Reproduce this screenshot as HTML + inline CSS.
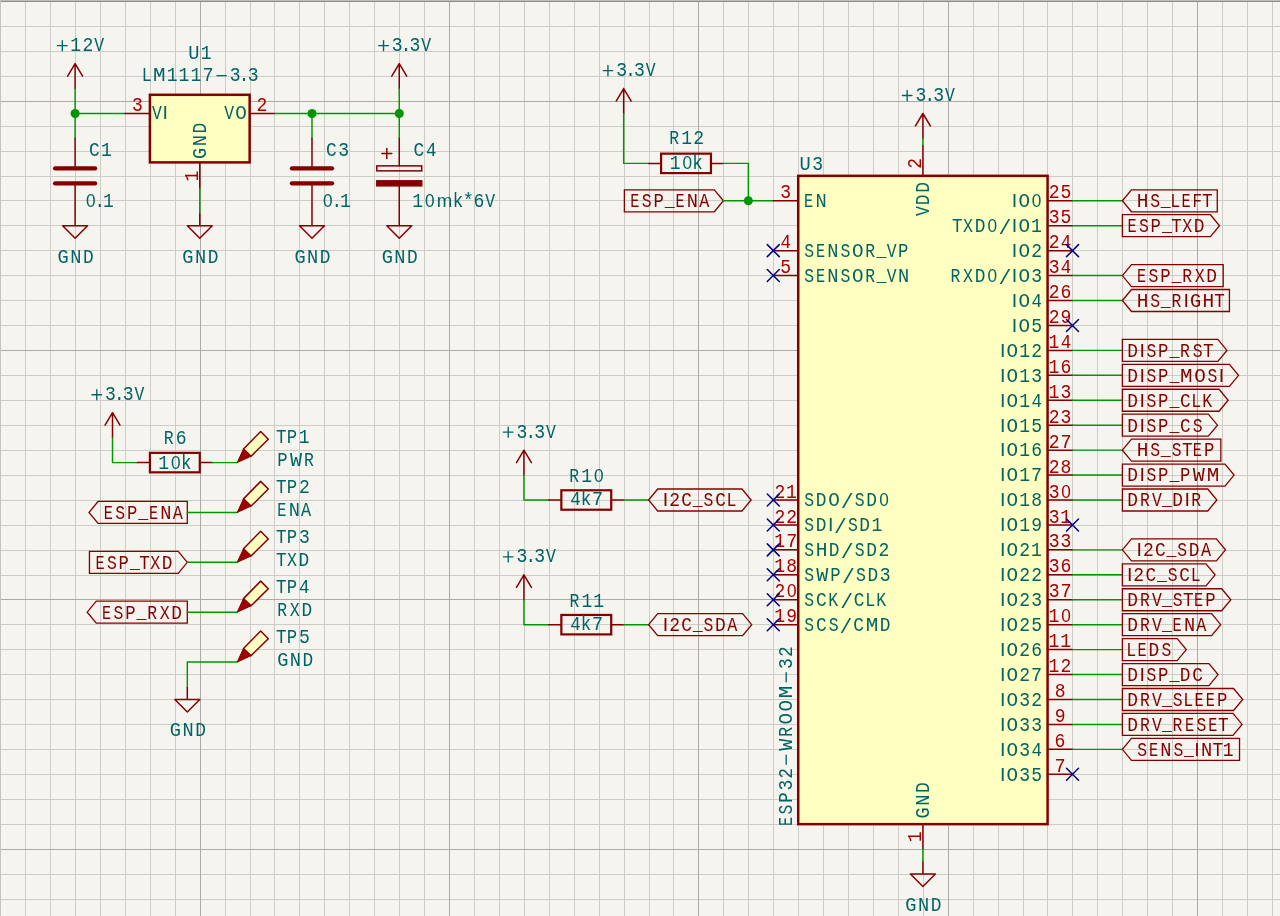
<!DOCTYPE html>
<html><head><meta charset="utf-8"><title>Schematic</title>
<style>html,body{margin:0;padding:0;background:#f5f4ef;overflow:hidden}svg{display:block;will-change:transform}
text{white-space:pre}.m{font-family:"Liberation Mono",monospace;font-size:20.5px}.s{font-family:"Liberation Sans",sans-serif;font-size:19.6px}</style></head>
<body><svg width="1280" height="916" viewBox="0 0 1280 916">
<rect width="1280" height="916" fill="#f5f4ef"/>
<path d="M0.5 0V916M25.5 0V916M50.5 0V916M75.5 0V916M100.5 0V916M125.5 0V916M150.5 0V916M175.5 0V916M225.5 0V916M250.5 0V916M274.5 0V916M299.5 0V916M324.5 0V916M349.5 0V916M374.5 0V916M399.5 0V916M424.5 0V916M474.5 0V916M499.5 0V916M524.5 0V916M549.5 0V916M574.5 0V916M599.5 0V916M624.5 0V916M649.5 0V916M673.5 0V916M723.5 0V916M748.5 0V916M773.5 0V916M798.5 0V916M823.5 0V916M848.5 0V916M873.5 0V916M898.5 0V916M923.5 0V916M973.5 0V916M998.5 0V916M1023.5 0V916M1047.5 0V916M1072.5 0V916M1097.5 0V916M1122.5 0V916M1147.5 0V916M1172.5 0V916M1222.5 0V916M1247.5 0V916M1272.5 0V916M0 1.5H1280M0 26.5H1280M0 51.5H1280M0 76.5H1280M0 126.5H1280M0 151.5H1280M0 176.5H1280M0 200.5H1280M0 225.5H1280M0 250.5H1280M0 275.5H1280M0 300.5H1280M0 325.5H1280M0 375.5H1280M0 400.5H1280M0 425.5H1280M0 450.5H1280M0 475.5H1280M0 500.5H1280M0 525.5H1280M0 550.5H1280M0 575.5H1280M0 624.5H1280M0 649.5H1280M0 674.5H1280M0 699.5H1280M0 724.5H1280M0 749.5H1280M0 774.5H1280M0 799.5H1280M0 824.5H1280M0 874.5H1280M0 899.5H1280" stroke="#cdccc6" stroke-width="1" fill="none" shape-rendering="crispEdges"/>
<path d="M200.5 0V916M449.5 0V916M698.5 0V916M948.5 0V916M1197.5 0V916M0 101.5H1280M0 350.5H1280M0 599.5H1280M0 849.5H1280" stroke="#abaaa5" stroke-width="1" fill="none" shape-rendering="crispEdges"/>
<rect x="0" y="0" width="1280" height="1" fill="#bebdb8"/>
<rect x="0" y="1" width="1280" height="1" fill="#8e8d89"/>
<rect x="0" y="0" width="1" height="916" fill="#c4c3be"/>
<path d="M75.10 88.57V63.64M67.62 76.10L75.10 63.64L82.59 76.10" fill="none" stroke="#840000" stroke-width="1.5" stroke-linecap="round" stroke-linejoin="round"/>
<g transform="translate(79.70,44.77)" fill="#006464"><text class="m" transform="translate(-3.71,0.00) scale(0.880,1.000)" x="-6.40" y="6.35">1</text><text class="m" transform="translate(8.16,0.00) scale(0.880,1.000)" x="-6.15" y="6.35">2</text><text class="m" transform="translate(19.44,0.00) scale(0.800,1.000)" x="-6.15" y="6.35">V</text><path d="M-22.16 0.9H-12.56M-17.36 -4.2V6.0" stroke="#006464" stroke-width="1.35" stroke-linecap="round" fill="none"/></g>
<polyline points="75.10,88.57 75.10,138.44" fill="none" stroke="#009600" stroke-width="1.45" stroke-linecap="round" stroke-linejoin="round"/>
<polyline points="75.10,113.51 124.97,113.51" fill="none" stroke="#009600" stroke-width="1.45" stroke-linecap="round" stroke-linejoin="round"/>
<circle cx="75.10" cy="113.51" r="4.5" fill="#009600"/>
<line x1="75.10" y1="138.44" x2="75.10" y2="168.36" stroke="#840000" stroke-width="1.50" stroke-linecap="round"/>
<line x1="75.10" y1="213.25" x2="75.10" y2="183.33" stroke="#840000" stroke-width="1.50" stroke-linecap="round"/>
<line x1="55.16" y1="168.36" x2="95.05" y2="168.36" stroke="#840000" stroke-width="4.40" stroke-linecap="round"/>
<line x1="55.16" y1="183.33" x2="95.05" y2="183.33" stroke="#840000" stroke-width="4.40" stroke-linecap="round"/>
<g transform="translate(89.50,150.00)" fill="#006464"><text class="m" transform="translate(4.86,0.00) scale(0.870,1.000)" x="-6.28" y="6.35">C</text><text class="m" transform="translate(17.03,0.00) scale(0.880,1.000)" x="-6.40" y="6.35">1</text></g>
<g transform="translate(86.30,200.40)" fill="#006464"><text class="s" transform="translate(4.56,0.00) scale(0.880,0.950)" x="-5.45" y="6.69">0</text><text class="m" transform="translate(13.46,0.00) scale(0.860,1.000)" x="-6.14" y="6.35">.</text><text class="m" transform="translate(22.37,0.00) scale(0.880,1.000)" x="-6.40" y="6.35">1</text></g>
<path d="M75.10 213.25V225.72M62.64 225.72H87.57L75.10 238.18Z" fill="none" stroke="#840000" stroke-width="1.5" stroke-linejoin="round"/>
<g transform="translate(75.80,256.35)" fill="#006464"><text class="m" transform="translate(-12.76,0.00) scale(0.910,1.000)" x="-6.09" y="6.35">G</text><text class="m" transform="translate(0.00,0.00) scale(0.910,1.000)" x="-6.15" y="6.35">N</text><text class="m" transform="translate(12.76,0.00) scale(0.870,1.000)" x="-6.44" y="6.35">D</text></g>
<rect x="149.91" y="94.81" width="99.74" height="67.57" fill="#ffffc2" stroke="#840000" stroke-width="2.5"/>
<line x1="124.97" y1="113.51" x2="149.91" y2="113.51" stroke="#840000" stroke-width="1.50" stroke-linecap="round"/>
<line x1="249.65" y1="113.51" x2="274.58" y2="113.51" stroke="#840000" stroke-width="1.50" stroke-linecap="round"/>
<line x1="199.78" y1="163.38" x2="199.78" y2="188.31" stroke="#840000" stroke-width="1.50" stroke-linecap="round"/>
<g transform="translate(199.50,53.00)" fill="#006464"><text class="m" transform="translate(-5.71,0.00) scale(0.910,1.000)" x="-6.14" y="6.35">U</text><text class="m" transform="translate(6.75,0.00) scale(0.880,1.000)" x="-6.40" y="6.35">1</text></g>
<g transform="translate(200.50,75.00)" fill="#006464"><text class="m" transform="translate(-53.43,0.00) scale(0.810,1.000)" x="-6.69" y="6.35">L</text><text class="m" transform="translate(-41.26,0.00) scale(1.020,1.000)" x="-6.15" y="6.35">M</text><text class="m" transform="translate(-28.20,0.00) scale(0.880,1.000)" x="-6.40" y="6.35">1</text><text class="m" transform="translate(-16.33,0.00) scale(0.880,1.000)" x="-6.40" y="6.35">1</text><text class="m" transform="translate(-4.45,0.00) scale(0.880,1.000)" x="-6.40" y="6.35">1</text><text class="m" transform="translate(7.42,0.00) scale(0.900,1.000)" x="-6.14" y="6.35">7</text><text class="m" transform="translate(34.73,0.00) scale(0.880,1.000)" x="-6.14" y="6.35">3</text><text class="m" transform="translate(43.63,0.00) scale(0.860,1.000)" x="-6.14" y="6.35">.</text><text class="m" transform="translate(52.54,0.00) scale(0.880,1.000)" x="-6.14" y="6.35">3</text><path d="M16.48 0.6H25.68" stroke="#006464" stroke-width="1.35" stroke-linecap="round" fill="none"/></g>
<g transform="translate(152.90,112.60)" fill="#006464"><text class="m" transform="translate(3.97,0.00) scale(0.800,1.000)" x="-6.15" y="6.35">V</text><text class="s" transform="translate(12.42,0.00) scale(1.000,0.950)" x="-2.72" y="6.69">I</text></g>
<g transform="translate(246.10,112.60)" fill="#006464"><text class="m" transform="translate(-17.03,0.00) scale(0.800,1.000)" x="-6.15" y="6.35">V</text><text class="m" transform="translate(-5.15,0.00) scale(0.940,1.000)" x="-6.15" y="6.35">O</text></g>
<g transform="translate(199.20,158.40) rotate(-90)" fill="#006464"><text class="m" transform="translate(4.86,0.00) scale(0.910,1.000)" x="-6.09" y="6.35">G</text><text class="m" transform="translate(17.62,0.00) scale(0.910,1.000)" x="-6.15" y="6.35">N</text><text class="m" transform="translate(30.38,0.00) scale(0.870,1.000)" x="-6.44" y="6.35">D</text></g>
<g transform="translate(137.30,105.00)" fill="#a90000"><text class="m" transform="translate(-0.00,0.00) scale(0.880,1.000)" x="-6.14" y="6.35">3</text></g>
<g transform="translate(261.80,105.00)" fill="#a90000"><text class="m" transform="translate(-0.00,0.00) scale(0.880,1.000)" x="-6.15" y="6.35">2</text></g>
<g transform="translate(191.60,175.90) rotate(-90)" fill="#a90000"><text class="m" transform="translate(-0.00,0.00) scale(0.880,1.000)" x="-6.40" y="6.35">1</text></g>
<polyline points="199.78,188.31 199.78,213.25" fill="none" stroke="#009600" stroke-width="1.45" stroke-linecap="round" stroke-linejoin="round"/>
<path d="M199.78 213.25V225.72M187.31 225.72H212.25L199.78 238.18Z" fill="none" stroke="#840000" stroke-width="1.5" stroke-linejoin="round"/>
<g transform="translate(200.48,256.35)" fill="#006464"><text class="m" transform="translate(-12.76,0.00) scale(0.910,1.000)" x="-6.09" y="6.35">G</text><text class="m" transform="translate(0.00,0.00) scale(0.910,1.000)" x="-6.15" y="6.35">N</text><text class="m" transform="translate(12.76,0.00) scale(0.870,1.000)" x="-6.44" y="6.35">D</text></g>
<polyline points="274.58,113.51 399.26,113.51" fill="none" stroke="#009600" stroke-width="1.45" stroke-linecap="round" stroke-linejoin="round"/>
<circle cx="311.99" cy="113.51" r="4.5" fill="#009600"/>
<circle cx="399.26" cy="113.51" r="4.5" fill="#009600"/>
<polyline points="311.99,113.51 311.99,138.44" fill="none" stroke="#009600" stroke-width="1.45" stroke-linecap="round" stroke-linejoin="round"/>
<line x1="311.99" y1="138.44" x2="311.99" y2="168.36" stroke="#840000" stroke-width="1.50" stroke-linecap="round"/>
<line x1="311.99" y1="213.25" x2="311.99" y2="183.33" stroke="#840000" stroke-width="1.50" stroke-linecap="round"/>
<line x1="292.04" y1="168.36" x2="331.94" y2="168.36" stroke="#840000" stroke-width="4.40" stroke-linecap="round"/>
<line x1="292.04" y1="183.33" x2="331.94" y2="183.33" stroke="#840000" stroke-width="4.40" stroke-linecap="round"/>
<g transform="translate(326.50,150.00)" fill="#006464"><text class="m" transform="translate(4.86,0.00) scale(0.870,1.000)" x="-6.28" y="6.35">C</text><text class="m" transform="translate(17.03,0.00) scale(0.880,1.000)" x="-6.14" y="6.35">3</text></g>
<g transform="translate(323.30,200.30)" fill="#006464"><text class="s" transform="translate(4.56,0.00) scale(0.880,0.950)" x="-5.45" y="6.69">0</text><text class="m" transform="translate(13.46,0.00) scale(0.860,1.000)" x="-6.14" y="6.35">.</text><text class="m" transform="translate(22.37,0.00) scale(0.880,1.000)" x="-6.40" y="6.35">1</text></g>
<path d="M311.99 213.25V225.72M299.52 225.72H324.45L311.99 238.18Z" fill="none" stroke="#840000" stroke-width="1.5" stroke-linejoin="round"/>
<g transform="translate(312.69,256.35)" fill="#006464"><text class="m" transform="translate(-12.76,0.00) scale(0.910,1.000)" x="-6.09" y="6.35">G</text><text class="m" transform="translate(-0.00,0.00) scale(0.910,1.000)" x="-6.15" y="6.35">N</text><text class="m" transform="translate(12.76,0.00) scale(0.870,1.000)" x="-6.44" y="6.35">D</text></g>
<path d="M399.26 88.57V63.64M391.78 76.10L399.26 63.64L406.74 76.10" fill="none" stroke="#840000" stroke-width="1.5" stroke-linecap="round" stroke-linejoin="round"/>
<g transform="translate(403.86,44.77)" fill="#006464"><text class="m" transform="translate(-6.68,0.00) scale(0.880,1.000)" x="-6.14" y="6.35">3</text><text class="m" transform="translate(2.23,0.00) scale(0.860,1.000)" x="-6.14" y="6.35">.</text><text class="m" transform="translate(11.13,0.00) scale(0.880,1.000)" x="-6.14" y="6.35">3</text><text class="m" transform="translate(22.41,0.00) scale(0.800,1.000)" x="-6.15" y="6.35">V</text><path d="M-25.13 0.9H-15.53M-20.33 -4.2V6.0" stroke="#006464" stroke-width="1.35" stroke-linecap="round" fill="none"/></g>
<polyline points="399.26,88.57 399.26,138.44" fill="none" stroke="#009600" stroke-width="1.45" stroke-linecap="round" stroke-linejoin="round"/>
<line x1="399.26" y1="138.44" x2="399.26" y2="165.87" stroke="#840000" stroke-width="1.50" stroke-linecap="round"/>
<line x1="399.26" y1="213.25" x2="399.26" y2="183.33" stroke="#840000" stroke-width="1.50" stroke-linecap="round"/>
<rect x="376.82" y="165.87" width="44.88" height="4.99" fill="none" stroke="#840000" stroke-width="1.5"/>
<rect x="376.82" y="180.83" width="44.88" height="4.99" fill="#840000" stroke="#840000" stroke-width="1.5"/>
<line x1="381.79" y1="153.40" x2="391.79" y2="153.40" stroke="#840000" stroke-width="1.50" stroke-linecap="round"/>
<line x1="386.79" y1="148.40" x2="386.79" y2="158.40" stroke="#840000" stroke-width="1.50" stroke-linecap="round"/>
<g transform="translate(414.20,150.00)" fill="#006464"><text class="m" transform="translate(4.86,0.00) scale(0.870,1.000)" x="-6.28" y="6.35">C</text><text class="m" transform="translate(17.03,0.00) scale(0.850,1.000)" x="-6.15" y="6.35">4</text></g>
<g transform="translate(413.70,200.30)" fill="#006464"><text class="m" transform="translate(4.11,0.00) scale(0.880,1.000)" x="-6.40" y="6.35">1</text><text class="s" transform="translate(15.99,0.00) scale(0.880,0.950)" x="-5.45" y="6.69">0</text><text class="s" transform="translate(30.83,0.00) scale(0.950,0.950)" x="-8.17" y="6.69">m</text><text class="m" transform="translate(44.78,0.00) scale(0.850,1.000)" x="-6.81" y="6.35">k</text><text class="m" transform="translate(54.58,0.00) scale(0.900,1.000)" x="-6.15" y="6.35">*</text><text class="m" transform="translate(65.26,0.00) scale(0.880,1.000)" x="-6.24" y="6.35">6</text><text class="m" transform="translate(76.54,0.00) scale(0.800,1.000)" x="-6.15" y="6.35">V</text></g>
<path d="M399.26 213.25V225.72M386.79 225.72H411.73L399.26 238.18Z" fill="none" stroke="#840000" stroke-width="1.5" stroke-linejoin="round"/>
<g transform="translate(399.96,256.35)" fill="#006464"><text class="m" transform="translate(-12.76,0.00) scale(0.910,1.000)" x="-6.09" y="6.35">G</text><text class="m" transform="translate(-0.00,0.00) scale(0.910,1.000)" x="-6.15" y="6.35">N</text><text class="m" transform="translate(12.76,0.00) scale(0.870,1.000)" x="-6.44" y="6.35">D</text></g>
<path d="M623.67 113.51V88.57M616.19 101.04L623.67 88.57L631.16 101.04" fill="none" stroke="#840000" stroke-width="1.5" stroke-linecap="round" stroke-linejoin="round"/>
<g transform="translate(628.27,69.71)" fill="#006464"><text class="m" transform="translate(-6.68,0.00) scale(0.880,1.000)" x="-6.14" y="6.35">3</text><text class="m" transform="translate(2.23,0.00) scale(0.860,1.000)" x="-6.14" y="6.35">.</text><text class="m" transform="translate(11.13,0.00) scale(0.880,1.000)" x="-6.14" y="6.35">3</text><text class="m" transform="translate(22.41,0.00) scale(0.800,1.000)" x="-6.15" y="6.35">V</text><path d="M-25.13 0.9H-15.53M-20.33 -4.2V6.0" stroke="#006464" stroke-width="1.35" stroke-linecap="round" fill="none"/></g>
<polyline points="623.67,113.51 623.67,163.38 648.61,163.38" fill="none" stroke="#009600" stroke-width="1.45" stroke-linecap="round" stroke-linejoin="round"/>
<line x1="648.61" y1="163.38" x2="661.08" y2="163.38" stroke="#840000" stroke-width="1.50" stroke-linecap="round"/>
<line x1="723.41" y1="163.38" x2="710.95" y2="163.38" stroke="#840000" stroke-width="1.50" stroke-linecap="round"/>
<rect x="661.08" y="153.65" width="49.87" height="19.45" fill="none" stroke="#840000" stroke-width="2.2"/>
<g transform="translate(686.50,137.80)" fill="#006464"><text class="m" transform="translate(-11.87,0.00) scale(0.800,1.000)" x="-6.70" y="6.35">R</text><text class="m" transform="translate(0.30,0.00) scale(0.880,1.000)" x="-6.40" y="6.35">1</text><text class="m" transform="translate(12.17,0.00) scale(0.880,1.000)" x="-6.15" y="6.35">2</text></g>
<g transform="translate(686.50,163.10)" fill="#006464"><text class="m" transform="translate(-11.21,0.00) scale(0.880,1.000)" x="-6.40" y="6.35">1</text><text class="s" transform="translate(0.67,0.00) scale(0.880,0.950)" x="-5.45" y="6.69">0</text><text class="m" transform="translate(11.65,0.00) scale(0.850,1.000)" x="-6.81" y="6.35">k</text></g>
<polyline points="723.41,163.38 748.35,163.38 748.35,200.78" fill="none" stroke="#009600" stroke-width="1.45" stroke-linecap="round" stroke-linejoin="round"/>
<polygon points="723.41,200.78 714.31,189.78 624.37,189.78 624.37,211.78 714.31,211.78" fill="none" stroke="#840000" stroke-width="1.3" stroke-linejoin="miter"/>
<g transform="translate(709.62,200.78)" fill="#840000"><text class="m" transform="translate(-74.51,0.00) scale(0.740,1.000)" x="-6.43" y="6.35">E</text><text class="m" transform="translate(-62.93,0.00) scale(0.800,1.000)" x="-6.04" y="6.35">S</text><text class="m" transform="translate(-50.76,0.00) scale(0.840,1.000)" x="-6.41" y="6.35">P</text><text class="m" transform="translate(-39.78,-1.00) scale(0.810,1.000)" x="-6.15" y="6.35">_</text><text class="m" transform="translate(-29.39,0.00) scale(0.740,1.000)" x="-6.43" y="6.35">E</text><text class="m" transform="translate(-17.22,0.00) scale(0.910,1.000)" x="-6.15" y="6.35">N</text><text class="m" transform="translate(-5.34,0.00) scale(0.820,1.000)" x="-6.15" y="6.35">A</text></g>
<polyline points="723.41,200.78 773.28,200.78" fill="none" stroke="#009600" stroke-width="1.45" stroke-linecap="round" stroke-linejoin="round"/>
<circle cx="748.35" cy="200.78" r="4.5" fill="#009600"/>
<rect x="798.22" y="175.84" width="249.35" height="648.31" fill="#ffffc2" stroke="#840000" stroke-width="2.5"/>
<g transform="translate(800.00,163.30)" fill="#006464"><text class="m" transform="translate(5.15,0.00) scale(0.910,1.000)" x="-6.14" y="6.35">U</text><text class="m" transform="translate(17.62,0.00) scale(0.880,1.000)" x="-6.14" y="6.35">3</text></g>
<g transform="translate(785.60,825.40) rotate(-90)" fill="#006464"><text class="m" transform="translate(4.26,0.00) scale(0.740,1.000)" x="-6.43" y="6.35">E</text><text class="m" transform="translate(15.84,0.00) scale(0.800,1.000)" x="-6.04" y="6.35">S</text><text class="m" transform="translate(28.01,0.00) scale(0.840,1.000)" x="-6.41" y="6.35">P</text><text class="m" transform="translate(40.18,0.00) scale(0.880,1.000)" x="-6.14" y="6.35">3</text><text class="m" transform="translate(52.05,0.00) scale(0.880,1.000)" x="-6.15" y="6.35">2</text><text class="m" transform="translate(80.55,0.00) scale(0.980,1.000)" x="-6.15" y="6.35">W</text><text class="m" transform="translate(93.91,0.00) scale(0.800,1.000)" x="-6.70" y="6.35">R</text><text class="m" transform="translate(106.67,0.00) scale(0.940,1.000)" x="-6.15" y="6.35">O</text><text class="m" transform="translate(119.73,0.00) scale(0.940,1.000)" x="-6.15" y="6.35">O</text><text class="m" transform="translate(133.38,0.00) scale(1.020,1.000)" x="-6.15" y="6.35">M</text><text class="m" transform="translate(161.88,0.00) scale(0.880,1.000)" x="-6.14" y="6.35">3</text><text class="m" transform="translate(173.75,0.00) scale(0.880,1.000)" x="-6.15" y="6.35">2</text><path d="M61.11 0.6H70.31M143.63 0.6H152.83" stroke="#006464" stroke-width="1.35" stroke-linecap="round" fill="none"/></g>
<path d="M922.89 138.44V113.51M915.41 125.97L922.89 113.51L930.38 125.97" fill="none" stroke="#840000" stroke-width="1.5" stroke-linecap="round" stroke-linejoin="round"/>
<g transform="translate(927.49,94.64)" fill="#006464"><text class="m" transform="translate(-6.68,0.00) scale(0.880,1.000)" x="-6.14" y="6.35">3</text><text class="m" transform="translate(2.23,0.00) scale(0.860,1.000)" x="-6.14" y="6.35">.</text><text class="m" transform="translate(11.13,0.00) scale(0.880,1.000)" x="-6.14" y="6.35">3</text><text class="m" transform="translate(22.41,0.00) scale(0.800,1.000)" x="-6.15" y="6.35">V</text><path d="M-25.13 0.9H-15.53M-20.33 -4.2V6.0" stroke="#006464" stroke-width="1.35" stroke-linecap="round" fill="none"/></g>
<polyline points="922.89,138.44 922.89,145.92" fill="none" stroke="#009600" stroke-width="1.45" stroke-linecap="round" stroke-linejoin="round"/>
<line x1="922.89" y1="145.92" x2="922.89" y2="175.84" stroke="#840000" stroke-width="1.50" stroke-linecap="round"/>
<g transform="translate(914.19,163.30) rotate(-90)" fill="#a90000"><text class="m" transform="translate(0.00,0.00) scale(0.880,1.000)" x="-6.15" y="6.35">2</text></g>
<g transform="translate(922.89,180.84) rotate(-90)" fill="#006464"><text class="m" transform="translate(-30.28,0.00) scale(0.800,1.000)" x="-6.15" y="6.35">V</text><text class="m" transform="translate(-18.70,0.00) scale(0.870,1.000)" x="-6.44" y="6.35">D</text><text class="m" transform="translate(-6.23,0.00) scale(0.870,1.000)" x="-6.44" y="6.35">D</text></g>
<line x1="922.89" y1="824.15" x2="922.89" y2="849.09" stroke="#840000" stroke-width="1.50" stroke-linecap="round"/>
<polyline points="922.89,849.09 922.89,861.56" fill="none" stroke="#009600" stroke-width="1.45" stroke-linecap="round" stroke-linejoin="round"/>
<path d="M922.89 861.56V874.02M910.43 874.02H935.36L922.89 886.49Z" fill="none" stroke="#840000" stroke-width="1.5" stroke-linejoin="round"/>
<g transform="translate(923.59,904.66)" fill="#006464"><text class="m" transform="translate(-12.76,0.00) scale(0.910,1.000)" x="-6.09" y="6.35">G</text><text class="m" transform="translate(-0.00,0.00) scale(0.910,1.000)" x="-6.15" y="6.35">N</text><text class="m" transform="translate(12.76,0.00) scale(0.870,1.000)" x="-6.44" y="6.35">D</text></g>
<g transform="translate(914.19,836.62) rotate(-90)" fill="#a90000"><text class="m" transform="translate(0.00,0.00) scale(0.880,1.000)" x="-6.40" y="6.35">1</text></g>
<g transform="translate(922.89,819.15) rotate(-90)" fill="#006464"><text class="m" transform="translate(6.23,0.00) scale(0.910,1.000)" x="-6.09" y="6.35">G</text><text class="m" transform="translate(19.00,0.00) scale(0.910,1.000)" x="-6.15" y="6.35">N</text><text class="m" transform="translate(31.76,0.00) scale(0.870,1.000)" x="-6.44" y="6.35">D</text></g>
<line x1="773.28" y1="200.78" x2="798.22" y2="200.78" stroke="#840000" stroke-width="1.50" stroke-linecap="round"/>
<g transform="translate(803.22,200.78)" fill="#006464"><text class="m" transform="translate(5.64,0.00) scale(0.740,1.000)" x="-6.43" y="6.35">E</text><text class="m" transform="translate(17.81,0.00) scale(0.910,1.000)" x="-6.15" y="6.35">N</text></g>
<g transform="translate(785.75,192.05)" fill="#a90000"><text class="m" transform="translate(0.00,0.00) scale(0.880,1.000)" x="-6.14" y="6.35">3</text></g>
<line x1="773.28" y1="250.65" x2="798.22" y2="250.65" stroke="#840000" stroke-width="1.50" stroke-linecap="round"/>
<g transform="translate(803.22,250.65)" fill="#006464"><text class="m" transform="translate(5.94,0.00) scale(0.800,1.000)" x="-6.04" y="6.35">S</text><text class="m" transform="translate(17.51,0.00) scale(0.740,1.000)" x="-6.43" y="6.35">E</text><text class="m" transform="translate(29.68,0.00) scale(0.910,1.000)" x="-6.15" y="6.35">N</text><text class="m" transform="translate(42.15,0.00) scale(0.800,1.000)" x="-6.04" y="6.35">S</text><text class="m" transform="translate(54.62,0.00) scale(0.940,1.000)" x="-6.15" y="6.35">O</text><text class="m" transform="translate(67.38,0.00) scale(0.800,1.000)" x="-6.70" y="6.35">R</text><text class="m" transform="translate(78.36,-1.00) scale(0.810,1.000)" x="-6.15" y="6.35">_</text><text class="m" transform="translate(88.46,0.00) scale(0.800,1.000)" x="-6.15" y="6.35">V</text><text class="m" transform="translate(100.03,0.00) scale(0.840,1.000)" x="-6.41" y="6.35">P</text></g>
<g transform="translate(785.75,241.92)" fill="#a90000"><text class="m" transform="translate(0.00,0.00) scale(0.850,1.000)" x="-6.15" y="6.35">4</text></g>
<path d="M767.28 244.65L779.28 256.65M767.28 256.65L779.28 244.65" stroke="#000084" stroke-width="1.5" stroke-linecap="round"/>
<line x1="773.28" y1="275.58" x2="798.22" y2="275.58" stroke="#840000" stroke-width="1.50" stroke-linecap="round"/>
<g transform="translate(803.22,275.58)" fill="#006464"><text class="m" transform="translate(5.94,0.00) scale(0.800,1.000)" x="-6.04" y="6.35">S</text><text class="m" transform="translate(17.51,0.00) scale(0.740,1.000)" x="-6.43" y="6.35">E</text><text class="m" transform="translate(29.68,0.00) scale(0.910,1.000)" x="-6.15" y="6.35">N</text><text class="m" transform="translate(42.15,0.00) scale(0.800,1.000)" x="-6.04" y="6.35">S</text><text class="m" transform="translate(54.62,0.00) scale(0.940,1.000)" x="-6.15" y="6.35">O</text><text class="m" transform="translate(67.38,0.00) scale(0.800,1.000)" x="-6.70" y="6.35">R</text><text class="m" transform="translate(78.36,-1.00) scale(0.810,1.000)" x="-6.15" y="6.35">_</text><text class="m" transform="translate(88.46,0.00) scale(0.800,1.000)" x="-6.15" y="6.35">V</text><text class="m" transform="translate(100.33,0.00) scale(0.910,1.000)" x="-6.15" y="6.35">N</text></g>
<g transform="translate(785.75,266.85)" fill="#a90000"><text class="m" transform="translate(0.00,0.00) scale(0.880,1.000)" x="-6.14" y="6.35">5</text></g>
<path d="M767.28 269.58L779.28 281.58M767.28 281.58L779.28 269.58" stroke="#000084" stroke-width="1.5" stroke-linecap="round"/>
<line x1="773.28" y1="500.00" x2="798.22" y2="500.00" stroke="#840000" stroke-width="1.50" stroke-linecap="round"/>
<g transform="translate(803.22,500.00)" fill="#006464"><text class="m" transform="translate(5.94,0.00) scale(0.800,1.000)" x="-6.04" y="6.35">S</text><text class="m" transform="translate(18.11,0.00) scale(0.870,1.000)" x="-6.44" y="6.35">D</text><text class="m" transform="translate(30.87,0.00) scale(0.940,1.000)" x="-6.15" y="6.35">O</text><text class="m" transform="translate(43.93,1.60) scale(1.050,1.000)" x="-6.14" y="6.35">/</text><text class="m" transform="translate(56.40,0.00) scale(0.800,1.000)" x="-6.04" y="6.35">S</text><text class="m" transform="translate(68.57,0.00) scale(0.870,1.000)" x="-6.44" y="6.35">D</text><text class="s" transform="translate(80.74,0.00) scale(0.880,0.950)" x="-5.45" y="6.69">0</text></g>
<g transform="translate(785.75,491.27)" fill="#a90000"><text class="m" transform="translate(-5.94,0.00) scale(0.880,1.000)" x="-6.15" y="6.35">2</text><text class="m" transform="translate(5.94,0.00) scale(0.880,1.000)" x="-6.40" y="6.35">1</text></g>
<path d="M767.28 494.00L779.28 506.00M767.28 506.00L779.28 494.00" stroke="#000084" stroke-width="1.5" stroke-linecap="round"/>
<line x1="773.28" y1="524.93" x2="798.22" y2="524.93" stroke="#840000" stroke-width="1.50" stroke-linecap="round"/>
<g transform="translate(803.22,524.93)" fill="#006464"><text class="m" transform="translate(5.94,0.00) scale(0.800,1.000)" x="-6.04" y="6.35">S</text><text class="m" transform="translate(18.11,0.00) scale(0.870,1.000)" x="-6.44" y="6.35">D</text><text class="s" transform="translate(27.46,0.00) scale(1.000,0.950)" x="-2.72" y="6.69">I</text><text class="m" transform="translate(37.10,1.60) scale(1.050,1.000)" x="-6.14" y="6.35">/</text><text class="m" transform="translate(49.57,0.00) scale(0.800,1.000)" x="-6.04" y="6.35">S</text><text class="m" transform="translate(61.74,0.00) scale(0.870,1.000)" x="-6.44" y="6.35">D</text><text class="m" transform="translate(73.91,0.00) scale(0.880,1.000)" x="-6.40" y="6.35">1</text></g>
<g transform="translate(785.75,516.20)" fill="#a90000"><text class="m" transform="translate(-5.94,0.00) scale(0.880,1.000)" x="-6.15" y="6.35">2</text><text class="m" transform="translate(5.94,0.00) scale(0.880,1.000)" x="-6.15" y="6.35">2</text></g>
<path d="M767.28 518.93L779.28 530.93M767.28 530.93L779.28 518.93" stroke="#000084" stroke-width="1.5" stroke-linecap="round"/>
<line x1="773.28" y1="549.87" x2="798.22" y2="549.87" stroke="#840000" stroke-width="1.50" stroke-linecap="round"/>
<g transform="translate(803.22,549.87)" fill="#006464"><text class="m" transform="translate(5.94,0.00) scale(0.800,1.000)" x="-6.04" y="6.35">S</text><text class="m" transform="translate(18.40,0.00) scale(0.950,1.000)" x="-6.15" y="6.35">H</text><text class="m" transform="translate(31.17,0.00) scale(0.870,1.000)" x="-6.44" y="6.35">D</text><text class="m" transform="translate(43.93,1.60) scale(1.050,1.000)" x="-6.14" y="6.35">/</text><text class="m" transform="translate(56.40,0.00) scale(0.800,1.000)" x="-6.04" y="6.35">S</text><text class="m" transform="translate(68.57,0.00) scale(0.870,1.000)" x="-6.44" y="6.35">D</text><text class="m" transform="translate(80.74,0.00) scale(0.880,1.000)" x="-6.15" y="6.35">2</text></g>
<g transform="translate(785.75,541.14)" fill="#a90000"><text class="m" transform="translate(-5.94,0.00) scale(0.880,1.000)" x="-6.40" y="6.35">1</text><text class="m" transform="translate(5.94,0.00) scale(0.900,1.000)" x="-6.14" y="6.35">7</text></g>
<path d="M767.28 543.87L779.28 555.87M767.28 555.87L779.28 543.87" stroke="#000084" stroke-width="1.5" stroke-linecap="round"/>
<line x1="773.28" y1="574.80" x2="798.22" y2="574.80" stroke="#840000" stroke-width="1.50" stroke-linecap="round"/>
<g transform="translate(803.22,574.80)" fill="#006464"><text class="m" transform="translate(5.94,0.00) scale(0.800,1.000)" x="-6.04" y="6.35">S</text><text class="m" transform="translate(19.00,0.00) scale(0.980,1.000)" x="-6.15" y="6.35">W</text><text class="m" transform="translate(32.35,0.00) scale(0.840,1.000)" x="-6.41" y="6.35">P</text><text class="m" transform="translate(45.12,1.60) scale(1.050,1.000)" x="-6.14" y="6.35">/</text><text class="m" transform="translate(57.59,0.00) scale(0.800,1.000)" x="-6.04" y="6.35">S</text><text class="m" transform="translate(69.76,0.00) scale(0.870,1.000)" x="-6.44" y="6.35">D</text><text class="m" transform="translate(81.93,0.00) scale(0.880,1.000)" x="-6.14" y="6.35">3</text></g>
<g transform="translate(785.75,566.07)" fill="#a90000"><text class="m" transform="translate(-5.94,0.00) scale(0.880,1.000)" x="-6.40" y="6.35">1</text><text class="m" transform="translate(5.94,0.00) scale(0.880,1.000)" x="-6.14" y="6.35">8</text></g>
<path d="M767.28 568.80L779.28 580.80M767.28 580.80L779.28 568.80" stroke="#000084" stroke-width="1.5" stroke-linecap="round"/>
<line x1="773.28" y1="599.74" x2="798.22" y2="599.74" stroke="#840000" stroke-width="1.50" stroke-linecap="round"/>
<g transform="translate(803.22,599.74)" fill="#006464"><text class="m" transform="translate(5.94,0.00) scale(0.800,1.000)" x="-6.04" y="6.35">S</text><text class="m" transform="translate(18.11,0.00) scale(0.870,1.000)" x="-6.28" y="6.35">C</text><text class="m" transform="translate(30.57,0.00) scale(0.810,1.000)" x="-6.95" y="6.35">K</text><text class="m" transform="translate(43.34,1.60) scale(1.050,1.000)" x="-6.14" y="6.35">/</text><text class="m" transform="translate(56.10,0.00) scale(0.870,1.000)" x="-6.28" y="6.35">C</text><text class="m" transform="translate(67.38,0.00) scale(0.810,1.000)" x="-6.69" y="6.35">L</text><text class="m" transform="translate(78.66,0.00) scale(0.810,1.000)" x="-6.95" y="6.35">K</text></g>
<g transform="translate(785.75,591.01)" fill="#a90000"><text class="m" transform="translate(-5.94,0.00) scale(0.880,1.000)" x="-6.15" y="6.35">2</text><text class="s" transform="translate(5.94,0.00) scale(0.880,0.950)" x="-5.45" y="6.69">0</text></g>
<path d="M767.28 593.74L779.28 605.74M767.28 605.74L779.28 593.74" stroke="#000084" stroke-width="1.5" stroke-linecap="round"/>
<line x1="773.28" y1="624.67" x2="798.22" y2="624.67" stroke="#840000" stroke-width="1.50" stroke-linecap="round"/>
<g transform="translate(803.22,624.67)" fill="#006464"><text class="m" transform="translate(5.94,0.00) scale(0.800,1.000)" x="-6.04" y="6.35">S</text><text class="m" transform="translate(18.11,0.00) scale(0.870,1.000)" x="-6.28" y="6.35">C</text><text class="m" transform="translate(30.28,0.00) scale(0.800,1.000)" x="-6.04" y="6.35">S</text><text class="m" transform="translate(42.74,1.60) scale(1.050,1.000)" x="-6.14" y="6.35">/</text><text class="m" transform="translate(55.51,0.00) scale(0.870,1.000)" x="-6.28" y="6.35">C</text><text class="m" transform="translate(68.87,0.00) scale(1.020,1.000)" x="-6.15" y="6.35">M</text><text class="m" transform="translate(82.22,0.00) scale(0.870,1.000)" x="-6.44" y="6.35">D</text></g>
<g transform="translate(785.75,615.94)" fill="#a90000"><text class="m" transform="translate(-5.94,0.00) scale(0.880,1.000)" x="-6.40" y="6.35">1</text><text class="m" transform="translate(5.94,0.00) scale(0.880,1.000)" x="-6.15" y="6.35">9</text></g>
<path d="M767.28 618.67L779.28 630.67M767.28 630.67L779.28 618.67" stroke="#000084" stroke-width="1.5" stroke-linecap="round"/>
<line x1="1047.57" y1="200.78" x2="1072.50" y2="200.78" stroke="#840000" stroke-width="1.50" stroke-linecap="round"/>
<g transform="translate(1042.57,200.78)" fill="#006464"><text class="s" transform="translate(-28.05,0.00) scale(1.000,0.950)" x="-2.72" y="6.69">I</text><text class="m" transform="translate(-18.40,0.00) scale(0.940,1.000)" x="-6.15" y="6.35">O</text><text class="s" transform="translate(-5.94,0.00) scale(0.880,0.950)" x="-5.45" y="6.69">0</text></g>
<g transform="translate(1060.04,192.05)" fill="#a90000"><text class="m" transform="translate(-5.94,0.00) scale(0.880,1.000)" x="-6.15" y="6.35">2</text><text class="m" transform="translate(5.94,0.00) scale(0.880,1.000)" x="-6.14" y="6.35">5</text></g>
<polyline points="1072.50,200.78 1122.38,200.78" fill="none" stroke="#009600" stroke-width="1.45" stroke-linecap="round" stroke-linejoin="round"/>
<polygon points="1122.38,200.78 1131.47,189.78 1217.26,189.78 1217.26,211.78 1131.47,211.78" fill="none" stroke="#840000" stroke-width="1.3" stroke-linejoin="miter"/>
<g transform="translate(1136.17,200.78)" fill="#840000"><text class="m" transform="translate(6.53,0.00) scale(0.950,1.000)" x="-6.15" y="6.35">H</text><text class="m" transform="translate(19.00,0.00) scale(0.800,1.000)" x="-6.04" y="6.35">S</text><text class="m" transform="translate(29.68,-1.00) scale(0.810,1.000)" x="-6.15" y="6.35">_</text><text class="m" transform="translate(39.48,0.00) scale(0.810,1.000)" x="-6.69" y="6.35">L</text><text class="m" transform="translate(50.16,0.00) scale(0.740,1.000)" x="-6.43" y="6.35">E</text><text class="m" transform="translate(61.15,0.00) scale(0.770,1.000)" x="-6.40" y="6.35">F</text><text class="m" transform="translate(71.24,0.00) scale(0.860,1.000)" x="-6.15" y="6.35">T</text></g>
<line x1="1047.57" y1="225.72" x2="1072.50" y2="225.72" stroke="#840000" stroke-width="1.50" stroke-linecap="round"/>
<g transform="translate(1042.57,225.72)" fill="#006464"><text class="m" transform="translate(-85.19,0.00) scale(0.860,1.000)" x="-6.15" y="6.35">T</text><text class="m" transform="translate(-74.51,0.00) scale(0.810,1.000)" x="-6.15" y="6.35">X</text><text class="m" transform="translate(-62.34,0.00) scale(0.870,1.000)" x="-6.44" y="6.35">D</text><text class="s" transform="translate(-50.16,0.00) scale(0.880,0.950)" x="-5.45" y="6.69">0</text><text class="m" transform="translate(-37.70,1.60) scale(1.050,1.000)" x="-6.14" y="6.35">/</text><text class="s" transform="translate(-28.05,0.00) scale(1.000,0.950)" x="-2.72" y="6.69">I</text><text class="m" transform="translate(-18.40,0.00) scale(0.940,1.000)" x="-6.15" y="6.35">O</text><text class="m" transform="translate(-5.94,0.00) scale(0.880,1.000)" x="-6.40" y="6.35">1</text></g>
<g transform="translate(1060.04,216.99)" fill="#a90000"><text class="m" transform="translate(-5.94,0.00) scale(0.880,1.000)" x="-6.14" y="6.35">3</text><text class="m" transform="translate(5.94,0.00) scale(0.880,1.000)" x="-6.14" y="6.35">5</text></g>
<polyline points="1072.50,225.72 1122.38,225.72" fill="none" stroke="#009600" stroke-width="1.45" stroke-linecap="round" stroke-linejoin="round"/>
<polygon points="1122.38,236.72 1122.38,214.72 1210.43,214.72 1219.53,225.72 1210.43,236.72" fill="none" stroke="#840000" stroke-width="1.3" stroke-linejoin="miter"/>
<g transform="translate(1126.58,225.72)" fill="#840000"><text class="m" transform="translate(5.64,0.00) scale(0.740,1.000)" x="-6.43" y="6.35">E</text><text class="m" transform="translate(17.22,0.00) scale(0.800,1.000)" x="-6.04" y="6.35">S</text><text class="m" transform="translate(29.39,0.00) scale(0.840,1.000)" x="-6.41" y="6.35">P</text><text class="m" transform="translate(40.37,-1.00) scale(0.810,1.000)" x="-6.15" y="6.35">_</text><text class="m" transform="translate(49.87,0.00) scale(0.860,1.000)" x="-6.15" y="6.35">T</text><text class="m" transform="translate(60.55,0.00) scale(0.810,1.000)" x="-6.15" y="6.35">X</text><text class="m" transform="translate(72.72,0.00) scale(0.870,1.000)" x="-6.44" y="6.35">D</text></g>
<line x1="1047.57" y1="250.65" x2="1072.50" y2="250.65" stroke="#840000" stroke-width="1.50" stroke-linecap="round"/>
<g transform="translate(1042.57,250.65)" fill="#006464"><text class="s" transform="translate(-28.05,0.00) scale(1.000,0.950)" x="-2.72" y="6.69">I</text><text class="m" transform="translate(-18.40,0.00) scale(0.940,1.000)" x="-6.15" y="6.35">O</text><text class="m" transform="translate(-5.94,0.00) scale(0.880,1.000)" x="-6.15" y="6.35">2</text></g>
<g transform="translate(1060.04,241.92)" fill="#a90000"><text class="m" transform="translate(-5.94,0.00) scale(0.880,1.000)" x="-6.15" y="6.35">2</text><text class="m" transform="translate(5.94,0.00) scale(0.850,1.000)" x="-6.15" y="6.35">4</text></g>
<path d="M1066.50 244.65L1078.50 256.65M1066.50 256.65L1078.50 244.65" stroke="#000084" stroke-width="1.5" stroke-linecap="round"/>
<line x1="1047.57" y1="275.58" x2="1072.50" y2="275.58" stroke="#840000" stroke-width="1.50" stroke-linecap="round"/>
<g transform="translate(1042.57,275.58)" fill="#006464"><text class="m" transform="translate(-86.68,0.00) scale(0.800,1.000)" x="-6.70" y="6.35">R</text><text class="m" transform="translate(-74.51,0.00) scale(0.810,1.000)" x="-6.15" y="6.35">X</text><text class="m" transform="translate(-62.33,0.00) scale(0.870,1.000)" x="-6.44" y="6.35">D</text><text class="s" transform="translate(-50.16,0.00) scale(0.880,0.950)" x="-5.45" y="6.69">0</text><text class="m" transform="translate(-37.70,1.60) scale(1.050,1.000)" x="-6.14" y="6.35">/</text><text class="s" transform="translate(-28.05,0.00) scale(1.000,0.950)" x="-2.72" y="6.69">I</text><text class="m" transform="translate(-18.40,0.00) scale(0.940,1.000)" x="-6.15" y="6.35">O</text><text class="m" transform="translate(-5.94,0.00) scale(0.880,1.000)" x="-6.14" y="6.35">3</text></g>
<g transform="translate(1060.04,266.85)" fill="#a90000"><text class="m" transform="translate(-5.94,0.00) scale(0.880,1.000)" x="-6.14" y="6.35">3</text><text class="m" transform="translate(5.94,0.00) scale(0.850,1.000)" x="-6.15" y="6.35">4</text></g>
<polyline points="1072.50,275.58 1122.38,275.58" fill="none" stroke="#009600" stroke-width="1.45" stroke-linecap="round" stroke-linejoin="round"/>
<polygon points="1122.38,275.58 1131.47,264.58 1223.20,264.58 1223.20,286.58 1131.47,286.58" fill="none" stroke="#840000" stroke-width="1.3" stroke-linejoin="miter"/>
<g transform="translate(1136.17,275.58)" fill="#840000"><text class="m" transform="translate(5.64,0.00) scale(0.740,1.000)" x="-6.43" y="6.35">E</text><text class="m" transform="translate(17.22,0.00) scale(0.800,1.000)" x="-6.04" y="6.35">S</text><text class="m" transform="translate(29.39,0.00) scale(0.840,1.000)" x="-6.41" y="6.35">P</text><text class="m" transform="translate(40.37,-1.00) scale(0.810,1.000)" x="-6.15" y="6.35">_</text><text class="m" transform="translate(51.35,0.00) scale(0.800,1.000)" x="-6.70" y="6.35">R</text><text class="m" transform="translate(63.52,0.00) scale(0.810,1.000)" x="-6.15" y="6.35">X</text><text class="m" transform="translate(75.69,0.00) scale(0.870,1.000)" x="-6.44" y="6.35">D</text></g>
<line x1="1047.57" y1="300.52" x2="1072.50" y2="300.52" stroke="#840000" stroke-width="1.50" stroke-linecap="round"/>
<g transform="translate(1042.57,300.52)" fill="#006464"><text class="s" transform="translate(-28.05,0.00) scale(1.000,0.950)" x="-2.72" y="6.69">I</text><text class="m" transform="translate(-18.40,0.00) scale(0.940,1.000)" x="-6.15" y="6.35">O</text><text class="m" transform="translate(-5.94,0.00) scale(0.850,1.000)" x="-6.15" y="6.35">4</text></g>
<g transform="translate(1060.04,291.79)" fill="#a90000"><text class="m" transform="translate(-5.94,0.00) scale(0.880,1.000)" x="-6.15" y="6.35">2</text><text class="m" transform="translate(5.94,0.00) scale(0.880,1.000)" x="-6.24" y="6.35">6</text></g>
<polyline points="1072.50,300.52 1122.38,300.52" fill="none" stroke="#009600" stroke-width="1.45" stroke-linecap="round" stroke-linejoin="round"/>
<polygon points="1122.38,300.52 1131.47,289.52 1229.43,289.52 1229.43,311.52 1131.47,311.52" fill="none" stroke="#840000" stroke-width="1.3" stroke-linejoin="miter"/>
<g transform="translate(1136.17,300.52)" fill="#840000"><text class="m" transform="translate(6.53,0.00) scale(0.950,1.000)" x="-6.15" y="6.35">H</text><text class="m" transform="translate(19.00,0.00) scale(0.800,1.000)" x="-6.04" y="6.35">S</text><text class="m" transform="translate(29.68,-1.00) scale(0.810,1.000)" x="-6.15" y="6.35">_</text><text class="m" transform="translate(40.67,0.00) scale(0.800,1.000)" x="-6.70" y="6.35">R</text><text class="s" transform="translate(50.02,0.00) scale(1.000,0.950)" x="-2.72" y="6.69">I</text><text class="m" transform="translate(59.37,0.00) scale(0.910,1.000)" x="-6.09" y="6.35">G</text><text class="m" transform="translate(72.13,0.00) scale(0.950,1.000)" x="-6.15" y="6.35">H</text><text class="m" transform="translate(83.41,0.00) scale(0.860,1.000)" x="-6.15" y="6.35">T</text></g>
<line x1="1047.57" y1="325.45" x2="1072.50" y2="325.45" stroke="#840000" stroke-width="1.50" stroke-linecap="round"/>
<g transform="translate(1042.57,325.45)" fill="#006464"><text class="s" transform="translate(-28.05,0.00) scale(1.000,0.950)" x="-2.72" y="6.69">I</text><text class="m" transform="translate(-18.40,0.00) scale(0.940,1.000)" x="-6.15" y="6.35">O</text><text class="m" transform="translate(-5.94,0.00) scale(0.880,1.000)" x="-6.14" y="6.35">5</text></g>
<g transform="translate(1060.04,316.72)" fill="#a90000"><text class="m" transform="translate(-5.94,0.00) scale(0.880,1.000)" x="-6.15" y="6.35">2</text><text class="m" transform="translate(5.94,0.00) scale(0.880,1.000)" x="-6.15" y="6.35">9</text></g>
<path d="M1066.50 319.45L1078.50 331.45M1066.50 331.45L1078.50 319.45" stroke="#000084" stroke-width="1.5" stroke-linecap="round"/>
<line x1="1047.57" y1="350.39" x2="1072.50" y2="350.39" stroke="#840000" stroke-width="1.50" stroke-linecap="round"/>
<g transform="translate(1042.57,350.39)" fill="#006464"><text class="s" transform="translate(-39.92,0.00) scale(1.000,0.950)" x="-2.72" y="6.69">I</text><text class="m" transform="translate(-30.28,0.00) scale(0.940,1.000)" x="-6.15" y="6.35">O</text><text class="m" transform="translate(-17.81,0.00) scale(0.880,1.000)" x="-6.40" y="6.35">1</text><text class="m" transform="translate(-5.94,0.00) scale(0.880,1.000)" x="-6.15" y="6.35">2</text></g>
<g transform="translate(1060.04,341.66)" fill="#a90000"><text class="m" transform="translate(-5.94,0.00) scale(0.880,1.000)" x="-6.40" y="6.35">1</text><text class="m" transform="translate(5.94,0.00) scale(0.850,1.000)" x="-6.15" y="6.35">4</text></g>
<polyline points="1072.50,350.39 1122.38,350.39" fill="none" stroke="#009600" stroke-width="1.45" stroke-linecap="round" stroke-linejoin="round"/>
<polygon points="1122.38,361.39 1122.38,339.39 1217.85,339.39 1226.95,350.39 1217.85,361.39" fill="none" stroke="#840000" stroke-width="1.3" stroke-linejoin="miter"/>
<g transform="translate(1126.58,350.39)" fill="#840000"><text class="m" transform="translate(6.23,0.00) scale(0.870,1.000)" x="-6.44" y="6.35">D</text><text class="s" transform="translate(15.58,0.00) scale(1.000,0.950)" x="-2.72" y="6.69">I</text><text class="m" transform="translate(24.64,0.00) scale(0.800,1.000)" x="-6.04" y="6.35">S</text><text class="m" transform="translate(36.81,0.00) scale(0.840,1.000)" x="-6.41" y="6.35">P</text><text class="m" transform="translate(47.79,-1.00) scale(0.810,1.000)" x="-6.15" y="6.35">_</text><text class="m" transform="translate(58.77,0.00) scale(0.800,1.000)" x="-6.70" y="6.35">R</text><text class="m" transform="translate(70.94,0.00) scale(0.800,1.000)" x="-6.04" y="6.35">S</text><text class="m" transform="translate(81.63,0.00) scale(0.860,1.000)" x="-6.15" y="6.35">T</text></g>
<line x1="1047.57" y1="375.32" x2="1072.50" y2="375.32" stroke="#840000" stroke-width="1.50" stroke-linecap="round"/>
<g transform="translate(1042.57,375.32)" fill="#006464"><text class="s" transform="translate(-39.92,0.00) scale(1.000,0.950)" x="-2.72" y="6.69">I</text><text class="m" transform="translate(-30.28,0.00) scale(0.940,1.000)" x="-6.15" y="6.35">O</text><text class="m" transform="translate(-17.81,0.00) scale(0.880,1.000)" x="-6.40" y="6.35">1</text><text class="m" transform="translate(-5.94,0.00) scale(0.880,1.000)" x="-6.14" y="6.35">3</text></g>
<g transform="translate(1060.04,366.59)" fill="#a90000"><text class="m" transform="translate(-5.94,0.00) scale(0.880,1.000)" x="-6.40" y="6.35">1</text><text class="m" transform="translate(5.94,0.00) scale(0.880,1.000)" x="-6.24" y="6.35">6</text></g>
<polyline points="1072.50,375.32 1122.38,375.32" fill="none" stroke="#009600" stroke-width="1.45" stroke-linecap="round" stroke-linejoin="round"/>
<polygon points="1122.38,386.32 1122.38,364.32 1229.43,364.32 1238.53,375.32 1229.43,386.32" fill="none" stroke="#840000" stroke-width="1.3" stroke-linejoin="miter"/>
<g transform="translate(1126.58,375.32)" fill="#840000"><text class="m" transform="translate(6.23,0.00) scale(0.870,1.000)" x="-6.44" y="6.35">D</text><text class="s" transform="translate(15.58,0.00) scale(1.000,0.950)" x="-2.72" y="6.69">I</text><text class="m" transform="translate(24.64,0.00) scale(0.800,1.000)" x="-6.04" y="6.35">S</text><text class="m" transform="translate(36.81,0.00) scale(0.840,1.000)" x="-6.41" y="6.35">P</text><text class="m" transform="translate(47.79,-1.00) scale(0.810,1.000)" x="-6.15" y="6.35">_</text><text class="m" transform="translate(59.66,0.00) scale(1.020,1.000)" x="-6.15" y="6.35">M</text><text class="m" transform="translate(73.32,0.00) scale(0.940,1.000)" x="-6.15" y="6.35">O</text><text class="m" transform="translate(85.78,0.00) scale(0.800,1.000)" x="-6.04" y="6.35">S</text><text class="s" transform="translate(94.84,0.00) scale(1.000,0.950)" x="-2.72" y="6.69">I</text></g>
<line x1="1047.57" y1="400.26" x2="1072.50" y2="400.26" stroke="#840000" stroke-width="1.50" stroke-linecap="round"/>
<g transform="translate(1042.57,400.26)" fill="#006464"><text class="s" transform="translate(-39.92,0.00) scale(1.000,0.950)" x="-2.72" y="6.69">I</text><text class="m" transform="translate(-30.28,0.00) scale(0.940,1.000)" x="-6.15" y="6.35">O</text><text class="m" transform="translate(-17.81,0.00) scale(0.880,1.000)" x="-6.40" y="6.35">1</text><text class="m" transform="translate(-5.94,0.00) scale(0.850,1.000)" x="-6.15" y="6.35">4</text></g>
<g transform="translate(1060.04,391.53)" fill="#a90000"><text class="m" transform="translate(-5.94,0.00) scale(0.880,1.000)" x="-6.40" y="6.35">1</text><text class="m" transform="translate(5.94,0.00) scale(0.880,1.000)" x="-6.14" y="6.35">3</text></g>
<polyline points="1072.50,400.26 1122.38,400.26" fill="none" stroke="#009600" stroke-width="1.45" stroke-linecap="round" stroke-linejoin="round"/>
<polygon points="1122.38,411.26 1122.38,389.26 1219.04,389.26 1228.14,400.26 1219.04,411.26" fill="none" stroke="#840000" stroke-width="1.3" stroke-linejoin="miter"/>
<g transform="translate(1126.58,400.26)" fill="#840000"><text class="m" transform="translate(6.23,0.00) scale(0.870,1.000)" x="-6.44" y="6.35">D</text><text class="s" transform="translate(15.58,0.00) scale(1.000,0.950)" x="-2.72" y="6.69">I</text><text class="m" transform="translate(24.64,0.00) scale(0.800,1.000)" x="-6.04" y="6.35">S</text><text class="m" transform="translate(36.81,0.00) scale(0.840,1.000)" x="-6.41" y="6.35">P</text><text class="m" transform="translate(47.79,-1.00) scale(0.810,1.000)" x="-6.15" y="6.35">_</text><text class="m" transform="translate(58.77,0.00) scale(0.870,1.000)" x="-6.28" y="6.35">C</text><text class="m" transform="translate(70.05,0.00) scale(0.810,1.000)" x="-6.69" y="6.35">L</text><text class="m" transform="translate(81.33,0.00) scale(0.810,1.000)" x="-6.95" y="6.35">K</text></g>
<line x1="1047.57" y1="425.19" x2="1072.50" y2="425.19" stroke="#840000" stroke-width="1.50" stroke-linecap="round"/>
<g transform="translate(1042.57,425.19)" fill="#006464"><text class="s" transform="translate(-39.92,0.00) scale(1.000,0.950)" x="-2.72" y="6.69">I</text><text class="m" transform="translate(-30.28,0.00) scale(0.940,1.000)" x="-6.15" y="6.35">O</text><text class="m" transform="translate(-17.81,0.00) scale(0.880,1.000)" x="-6.40" y="6.35">1</text><text class="m" transform="translate(-5.94,0.00) scale(0.880,1.000)" x="-6.14" y="6.35">5</text></g>
<g transform="translate(1060.04,416.46)" fill="#a90000"><text class="m" transform="translate(-5.94,0.00) scale(0.880,1.000)" x="-6.15" y="6.35">2</text><text class="m" transform="translate(5.94,0.00) scale(0.880,1.000)" x="-6.14" y="6.35">3</text></g>
<polyline points="1072.50,425.19 1122.38,425.19" fill="none" stroke="#009600" stroke-width="1.45" stroke-linecap="round" stroke-linejoin="round"/>
<polygon points="1122.38,436.19 1122.38,414.19 1208.35,414.19 1217.45,425.19 1208.35,436.19" fill="none" stroke="#840000" stroke-width="1.3" stroke-linejoin="miter"/>
<g transform="translate(1126.58,425.19)" fill="#840000"><text class="m" transform="translate(6.23,0.00) scale(0.870,1.000)" x="-6.44" y="6.35">D</text><text class="s" transform="translate(15.58,0.00) scale(1.000,0.950)" x="-2.72" y="6.69">I</text><text class="m" transform="translate(24.64,0.00) scale(0.800,1.000)" x="-6.04" y="6.35">S</text><text class="m" transform="translate(36.81,0.00) scale(0.840,1.000)" x="-6.41" y="6.35">P</text><text class="m" transform="translate(47.79,-1.00) scale(0.810,1.000)" x="-6.15" y="6.35">_</text><text class="m" transform="translate(58.77,0.00) scale(0.870,1.000)" x="-6.28" y="6.35">C</text><text class="m" transform="translate(70.94,0.00) scale(0.800,1.000)" x="-6.04" y="6.35">S</text></g>
<line x1="1047.57" y1="450.13" x2="1072.50" y2="450.13" stroke="#840000" stroke-width="1.50" stroke-linecap="round"/>
<g transform="translate(1042.57,450.13)" fill="#006464"><text class="s" transform="translate(-39.92,0.00) scale(1.000,0.950)" x="-2.72" y="6.69">I</text><text class="m" transform="translate(-30.28,0.00) scale(0.940,1.000)" x="-6.15" y="6.35">O</text><text class="m" transform="translate(-17.81,0.00) scale(0.880,1.000)" x="-6.40" y="6.35">1</text><text class="m" transform="translate(-5.94,0.00) scale(0.880,1.000)" x="-6.24" y="6.35">6</text></g>
<g transform="translate(1060.04,441.40)" fill="#a90000"><text class="m" transform="translate(-5.94,0.00) scale(0.880,1.000)" x="-6.15" y="6.35">2</text><text class="m" transform="translate(5.94,0.00) scale(0.900,1.000)" x="-6.14" y="6.35">7</text></g>
<polyline points="1072.50,450.13 1122.38,450.13" fill="none" stroke="#009600" stroke-width="1.45" stroke-linecap="round" stroke-linejoin="round"/>
<polygon points="1122.38,450.13 1131.47,439.13 1220.83,439.13 1220.83,461.13 1131.47,461.13" fill="none" stroke="#840000" stroke-width="1.3" stroke-linejoin="miter"/>
<g transform="translate(1136.17,450.13)" fill="#840000"><text class="m" transform="translate(6.53,0.00) scale(0.950,1.000)" x="-6.15" y="6.35">H</text><text class="m" transform="translate(19.00,0.00) scale(0.800,1.000)" x="-6.04" y="6.35">S</text><text class="m" transform="translate(29.68,-1.00) scale(0.810,1.000)" x="-6.15" y="6.35">_</text><text class="m" transform="translate(40.37,0.00) scale(0.800,1.000)" x="-6.04" y="6.35">S</text><text class="m" transform="translate(51.06,0.00) scale(0.860,1.000)" x="-6.15" y="6.35">T</text><text class="m" transform="translate(61.44,0.00) scale(0.740,1.000)" x="-6.43" y="6.35">E</text><text class="m" transform="translate(73.32,0.00) scale(0.840,1.000)" x="-6.41" y="6.35">P</text></g>
<line x1="1047.57" y1="475.06" x2="1072.50" y2="475.06" stroke="#840000" stroke-width="1.50" stroke-linecap="round"/>
<g transform="translate(1042.57,475.06)" fill="#006464"><text class="s" transform="translate(-39.92,0.00) scale(1.000,0.950)" x="-2.72" y="6.69">I</text><text class="m" transform="translate(-30.28,0.00) scale(0.940,1.000)" x="-6.15" y="6.35">O</text><text class="m" transform="translate(-17.81,0.00) scale(0.880,1.000)" x="-6.40" y="6.35">1</text><text class="m" transform="translate(-5.94,0.00) scale(0.900,1.000)" x="-6.14" y="6.35">7</text></g>
<g transform="translate(1060.04,466.33)" fill="#a90000"><text class="m" transform="translate(-5.94,0.00) scale(0.880,1.000)" x="-6.15" y="6.35">2</text><text class="m" transform="translate(5.94,0.00) scale(0.880,1.000)" x="-6.14" y="6.35">8</text></g>
<polyline points="1072.50,475.06 1122.38,475.06" fill="none" stroke="#009600" stroke-width="1.45" stroke-linecap="round" stroke-linejoin="round"/>
<polygon points="1122.38,486.06 1122.38,464.06 1224.98,464.06 1234.08,475.06 1224.98,486.06" fill="none" stroke="#840000" stroke-width="1.3" stroke-linejoin="miter"/>
<g transform="translate(1126.58,475.06)" fill="#840000"><text class="m" transform="translate(6.23,0.00) scale(0.870,1.000)" x="-6.44" y="6.35">D</text><text class="s" transform="translate(15.58,0.00) scale(1.000,0.950)" x="-2.72" y="6.69">I</text><text class="m" transform="translate(24.64,0.00) scale(0.800,1.000)" x="-6.04" y="6.35">S</text><text class="m" transform="translate(36.81,0.00) scale(0.840,1.000)" x="-6.41" y="6.35">P</text><text class="m" transform="translate(47.79,-1.00) scale(0.810,1.000)" x="-6.15" y="6.35">_</text><text class="m" transform="translate(58.77,0.00) scale(0.840,1.000)" x="-6.41" y="6.35">P</text><text class="m" transform="translate(72.13,0.00) scale(0.980,1.000)" x="-6.15" y="6.35">W</text><text class="m" transform="translate(86.38,0.00) scale(1.020,1.000)" x="-6.15" y="6.35">M</text></g>
<line x1="1047.57" y1="500.00" x2="1072.50" y2="500.00" stroke="#840000" stroke-width="1.50" stroke-linecap="round"/>
<g transform="translate(1042.57,500.00)" fill="#006464"><text class="s" transform="translate(-39.92,0.00) scale(1.000,0.950)" x="-2.72" y="6.69">I</text><text class="m" transform="translate(-30.28,0.00) scale(0.940,1.000)" x="-6.15" y="6.35">O</text><text class="m" transform="translate(-17.81,0.00) scale(0.880,1.000)" x="-6.40" y="6.35">1</text><text class="m" transform="translate(-5.94,0.00) scale(0.880,1.000)" x="-6.14" y="6.35">8</text></g>
<g transform="translate(1060.04,491.27)" fill="#a90000"><text class="m" transform="translate(-5.94,0.00) scale(0.880,1.000)" x="-6.14" y="6.35">3</text><text class="s" transform="translate(5.94,0.00) scale(0.880,0.950)" x="-5.45" y="6.69">0</text></g>
<polyline points="1072.50,500.00 1122.38,500.00" fill="none" stroke="#009600" stroke-width="1.45" stroke-linecap="round" stroke-linejoin="round"/>
<polygon points="1122.38,511.00 1122.38,489.00 1207.76,489.00 1216.86,500.00 1207.76,511.00" fill="none" stroke="#840000" stroke-width="1.3" stroke-linejoin="miter"/>
<g transform="translate(1126.58,500.00)" fill="#840000"><text class="m" transform="translate(6.23,0.00) scale(0.870,1.000)" x="-6.44" y="6.35">D</text><text class="m" transform="translate(18.70,0.00) scale(0.800,1.000)" x="-6.70" y="6.35">R</text><text class="m" transform="translate(30.28,0.00) scale(0.800,1.000)" x="-6.15" y="6.35">V</text><text class="m" transform="translate(40.37,-1.00) scale(0.810,1.000)" x="-6.15" y="6.35">_</text><text class="m" transform="translate(51.35,0.00) scale(0.870,1.000)" x="-6.44" y="6.35">D</text><text class="s" transform="translate(60.70,0.00) scale(1.000,0.950)" x="-2.72" y="6.69">I</text><text class="m" transform="translate(70.05,0.00) scale(0.800,1.000)" x="-6.70" y="6.35">R</text></g>
<line x1="1047.57" y1="524.93" x2="1072.50" y2="524.93" stroke="#840000" stroke-width="1.50" stroke-linecap="round"/>
<g transform="translate(1042.57,524.93)" fill="#006464"><text class="s" transform="translate(-39.92,0.00) scale(1.000,0.950)" x="-2.72" y="6.69">I</text><text class="m" transform="translate(-30.28,0.00) scale(0.940,1.000)" x="-6.15" y="6.35">O</text><text class="m" transform="translate(-17.81,0.00) scale(0.880,1.000)" x="-6.40" y="6.35">1</text><text class="m" transform="translate(-5.94,0.00) scale(0.880,1.000)" x="-6.15" y="6.35">9</text></g>
<g transform="translate(1060.04,516.20)" fill="#a90000"><text class="m" transform="translate(-5.94,0.00) scale(0.880,1.000)" x="-6.14" y="6.35">3</text><text class="m" transform="translate(5.94,0.00) scale(0.880,1.000)" x="-6.40" y="6.35">1</text></g>
<path d="M1066.50 518.93L1078.50 530.93M1066.50 530.93L1078.50 518.93" stroke="#000084" stroke-width="1.5" stroke-linecap="round"/>
<line x1="1047.57" y1="549.87" x2="1072.50" y2="549.87" stroke="#840000" stroke-width="1.50" stroke-linecap="round"/>
<g transform="translate(1042.57,549.87)" fill="#006464"><text class="s" transform="translate(-39.92,0.00) scale(1.000,0.950)" x="-2.72" y="6.69">I</text><text class="m" transform="translate(-30.28,0.00) scale(0.940,1.000)" x="-6.15" y="6.35">O</text><text class="m" transform="translate(-17.81,0.00) scale(0.880,1.000)" x="-6.15" y="6.35">2</text><text class="m" transform="translate(-5.94,0.00) scale(0.880,1.000)" x="-6.40" y="6.35">1</text></g>
<g transform="translate(1060.04,541.14)" fill="#a90000"><text class="m" transform="translate(-5.94,0.00) scale(0.880,1.000)" x="-6.14" y="6.35">3</text><text class="m" transform="translate(5.94,0.00) scale(0.880,1.000)" x="-6.14" y="6.35">3</text></g>
<polyline points="1072.50,549.87 1122.38,549.87" fill="none" stroke="#009600" stroke-width="1.45" stroke-linecap="round" stroke-linejoin="round"/>
<polygon points="1122.38,549.87 1131.47,538.87 1216.37,538.87 1225.47,549.87 1216.37,560.87 1131.47,560.87" fill="none" stroke="#840000" stroke-width="1.3" stroke-linejoin="miter"/>
<g transform="translate(1136.17,549.87)" fill="#840000"><text class="s" transform="translate(3.12,0.00) scale(1.000,0.950)" x="-2.72" y="6.69">I</text><text class="m" transform="translate(12.17,0.00) scale(0.880,1.000)" x="-6.15" y="6.35">2</text><text class="m" transform="translate(24.34,0.00) scale(0.870,1.000)" x="-6.28" y="6.35">C</text><text class="m" transform="translate(35.32,-1.00) scale(0.810,1.000)" x="-6.15" y="6.35">_</text><text class="m" transform="translate(46.01,0.00) scale(0.800,1.000)" x="-6.04" y="6.35">S</text><text class="m" transform="translate(58.18,0.00) scale(0.870,1.000)" x="-6.44" y="6.35">D</text><text class="m" transform="translate(69.76,0.00) scale(0.820,1.000)" x="-6.15" y="6.35">A</text></g>
<line x1="1047.57" y1="574.80" x2="1072.50" y2="574.80" stroke="#840000" stroke-width="1.50" stroke-linecap="round"/>
<g transform="translate(1042.57,574.80)" fill="#006464"><text class="s" transform="translate(-39.92,0.00) scale(1.000,0.950)" x="-2.72" y="6.69">I</text><text class="m" transform="translate(-30.28,0.00) scale(0.940,1.000)" x="-6.15" y="6.35">O</text><text class="m" transform="translate(-17.81,0.00) scale(0.880,1.000)" x="-6.15" y="6.35">2</text><text class="m" transform="translate(-5.94,0.00) scale(0.880,1.000)" x="-6.15" y="6.35">2</text></g>
<g transform="translate(1060.04,566.07)" fill="#a90000"><text class="m" transform="translate(-5.94,0.00) scale(0.880,1.000)" x="-6.14" y="6.35">3</text><text class="m" transform="translate(5.94,0.00) scale(0.880,1.000)" x="-6.24" y="6.35">6</text></g>
<polyline points="1072.50,574.80 1122.38,574.80" fill="none" stroke="#009600" stroke-width="1.45" stroke-linecap="round" stroke-linejoin="round"/>
<polygon points="1122.38,585.80 1122.38,563.80 1205.98,563.80 1215.08,574.80 1205.98,585.80" fill="none" stroke="#840000" stroke-width="1.3" stroke-linejoin="miter"/>
<g transform="translate(1126.58,574.80)" fill="#840000"><text class="s" transform="translate(3.12,0.00) scale(1.000,0.950)" x="-2.72" y="6.69">I</text><text class="m" transform="translate(12.17,0.00) scale(0.880,1.000)" x="-6.15" y="6.35">2</text><text class="m" transform="translate(24.34,0.00) scale(0.870,1.000)" x="-6.28" y="6.35">C</text><text class="m" transform="translate(35.32,-1.00) scale(0.810,1.000)" x="-6.15" y="6.35">_</text><text class="m" transform="translate(46.01,0.00) scale(0.800,1.000)" x="-6.04" y="6.35">S</text><text class="m" transform="translate(58.18,0.00) scale(0.870,1.000)" x="-6.28" y="6.35">C</text><text class="m" transform="translate(69.46,0.00) scale(0.810,1.000)" x="-6.69" y="6.35">L</text></g>
<line x1="1047.57" y1="599.74" x2="1072.50" y2="599.74" stroke="#840000" stroke-width="1.50" stroke-linecap="round"/>
<g transform="translate(1042.57,599.74)" fill="#006464"><text class="s" transform="translate(-39.92,0.00) scale(1.000,0.950)" x="-2.72" y="6.69">I</text><text class="m" transform="translate(-30.28,0.00) scale(0.940,1.000)" x="-6.15" y="6.35">O</text><text class="m" transform="translate(-17.81,0.00) scale(0.880,1.000)" x="-6.15" y="6.35">2</text><text class="m" transform="translate(-5.94,0.00) scale(0.880,1.000)" x="-6.14" y="6.35">3</text></g>
<g transform="translate(1060.04,591.01)" fill="#a90000"><text class="m" transform="translate(-5.94,0.00) scale(0.880,1.000)" x="-6.14" y="6.35">3</text><text class="m" transform="translate(5.94,0.00) scale(0.900,1.000)" x="-6.14" y="6.35">7</text></g>
<polyline points="1072.50,599.74 1122.38,599.74" fill="none" stroke="#009600" stroke-width="1.45" stroke-linecap="round" stroke-linejoin="round"/>
<polygon points="1122.38,610.74 1122.38,588.74 1221.71,588.74 1230.81,599.74 1221.71,610.74" fill="none" stroke="#840000" stroke-width="1.3" stroke-linejoin="miter"/>
<g transform="translate(1126.58,599.74)" fill="#840000"><text class="m" transform="translate(6.23,0.00) scale(0.870,1.000)" x="-6.44" y="6.35">D</text><text class="m" transform="translate(18.70,0.00) scale(0.800,1.000)" x="-6.70" y="6.35">R</text><text class="m" transform="translate(30.28,0.00) scale(0.800,1.000)" x="-6.15" y="6.35">V</text><text class="m" transform="translate(40.37,-1.00) scale(0.810,1.000)" x="-6.15" y="6.35">_</text><text class="m" transform="translate(51.06,0.00) scale(0.800,1.000)" x="-6.04" y="6.35">S</text><text class="m" transform="translate(61.74,0.00) scale(0.860,1.000)" x="-6.15" y="6.35">T</text><text class="m" transform="translate(72.13,0.00) scale(0.740,1.000)" x="-6.43" y="6.35">E</text><text class="m" transform="translate(84.00,0.00) scale(0.840,1.000)" x="-6.41" y="6.35">P</text></g>
<line x1="1047.57" y1="624.67" x2="1072.50" y2="624.67" stroke="#840000" stroke-width="1.50" stroke-linecap="round"/>
<g transform="translate(1042.57,624.67)" fill="#006464"><text class="s" transform="translate(-39.92,0.00) scale(1.000,0.950)" x="-2.72" y="6.69">I</text><text class="m" transform="translate(-30.28,0.00) scale(0.940,1.000)" x="-6.15" y="6.35">O</text><text class="m" transform="translate(-17.81,0.00) scale(0.880,1.000)" x="-6.15" y="6.35">2</text><text class="m" transform="translate(-5.94,0.00) scale(0.880,1.000)" x="-6.14" y="6.35">5</text></g>
<g transform="translate(1060.04,615.94)" fill="#a90000"><text class="m" transform="translate(-5.94,0.00) scale(0.880,1.000)" x="-6.40" y="6.35">1</text><text class="s" transform="translate(5.94,0.00) scale(0.880,0.950)" x="-5.45" y="6.69">0</text></g>
<polyline points="1072.50,624.67 1122.38,624.67" fill="none" stroke="#009600" stroke-width="1.45" stroke-linecap="round" stroke-linejoin="round"/>
<polygon points="1122.38,635.67 1122.38,613.67 1211.62,613.67 1220.72,624.67 1211.62,635.67" fill="none" stroke="#840000" stroke-width="1.3" stroke-linejoin="miter"/>
<g transform="translate(1126.58,624.67)" fill="#840000"><text class="m" transform="translate(6.23,0.00) scale(0.870,1.000)" x="-6.44" y="6.35">D</text><text class="m" transform="translate(18.70,0.00) scale(0.800,1.000)" x="-6.70" y="6.35">R</text><text class="m" transform="translate(30.28,0.00) scale(0.800,1.000)" x="-6.15" y="6.35">V</text><text class="m" transform="translate(40.37,-1.00) scale(0.810,1.000)" x="-6.15" y="6.35">_</text><text class="m" transform="translate(50.76,0.00) scale(0.740,1.000)" x="-6.43" y="6.35">E</text><text class="m" transform="translate(62.93,0.00) scale(0.910,1.000)" x="-6.15" y="6.35">N</text><text class="m" transform="translate(74.80,0.00) scale(0.820,1.000)" x="-6.15" y="6.35">A</text></g>
<line x1="1047.57" y1="649.61" x2="1072.50" y2="649.61" stroke="#840000" stroke-width="1.50" stroke-linecap="round"/>
<g transform="translate(1042.57,649.61)" fill="#006464"><text class="s" transform="translate(-39.92,0.00) scale(1.000,0.950)" x="-2.72" y="6.69">I</text><text class="m" transform="translate(-30.28,0.00) scale(0.940,1.000)" x="-6.15" y="6.35">O</text><text class="m" transform="translate(-17.81,0.00) scale(0.880,1.000)" x="-6.15" y="6.35">2</text><text class="m" transform="translate(-5.94,0.00) scale(0.880,1.000)" x="-6.24" y="6.35">6</text></g>
<g transform="translate(1060.04,640.88)" fill="#a90000"><text class="m" transform="translate(-5.94,0.00) scale(0.880,1.000)" x="-6.40" y="6.35">1</text><text class="m" transform="translate(5.94,0.00) scale(0.880,1.000)" x="-6.40" y="6.35">1</text></g>
<polyline points="1072.50,649.61 1122.38,649.61" fill="none" stroke="#009600" stroke-width="1.45" stroke-linecap="round" stroke-linejoin="round"/>
<polygon points="1122.38,660.61 1122.38,638.61 1177.19,638.61 1186.29,649.61 1177.19,660.61" fill="none" stroke="#840000" stroke-width="1.3" stroke-linejoin="miter"/>
<g transform="translate(1126.58,649.61)" fill="#840000"><text class="m" transform="translate(5.05,0.00) scale(0.810,1.000)" x="-6.69" y="6.35">L</text><text class="m" transform="translate(15.73,0.00) scale(0.740,1.000)" x="-6.43" y="6.35">E</text><text class="m" transform="translate(27.61,0.00) scale(0.870,1.000)" x="-6.44" y="6.35">D</text><text class="m" transform="translate(39.78,0.00) scale(0.800,1.000)" x="-6.04" y="6.35">S</text></g>
<line x1="1047.57" y1="674.54" x2="1072.50" y2="674.54" stroke="#840000" stroke-width="1.50" stroke-linecap="round"/>
<g transform="translate(1042.57,674.54)" fill="#006464"><text class="s" transform="translate(-39.92,0.00) scale(1.000,0.950)" x="-2.72" y="6.69">I</text><text class="m" transform="translate(-30.28,0.00) scale(0.940,1.000)" x="-6.15" y="6.35">O</text><text class="m" transform="translate(-17.81,0.00) scale(0.880,1.000)" x="-6.15" y="6.35">2</text><text class="m" transform="translate(-5.94,0.00) scale(0.900,1.000)" x="-6.14" y="6.35">7</text></g>
<g transform="translate(1060.04,665.81)" fill="#a90000"><text class="m" transform="translate(-5.94,0.00) scale(0.880,1.000)" x="-6.40" y="6.35">1</text><text class="m" transform="translate(5.94,0.00) scale(0.880,1.000)" x="-6.15" y="6.35">2</text></g>
<polyline points="1072.50,674.54 1122.38,674.54" fill="none" stroke="#009600" stroke-width="1.45" stroke-linecap="round" stroke-linejoin="round"/>
<polygon points="1122.38,685.54 1122.38,663.54 1208.95,663.54 1218.05,674.54 1208.95,685.54" fill="none" stroke="#840000" stroke-width="1.3" stroke-linejoin="miter"/>
<g transform="translate(1126.58,674.54)" fill="#840000"><text class="m" transform="translate(6.23,0.00) scale(0.870,1.000)" x="-6.44" y="6.35">D</text><text class="s" transform="translate(15.58,0.00) scale(1.000,0.950)" x="-2.72" y="6.69">I</text><text class="m" transform="translate(24.64,0.00) scale(0.800,1.000)" x="-6.04" y="6.35">S</text><text class="m" transform="translate(36.81,0.00) scale(0.840,1.000)" x="-6.41" y="6.35">P</text><text class="m" transform="translate(47.79,-1.00) scale(0.810,1.000)" x="-6.15" y="6.35">_</text><text class="m" transform="translate(58.77,0.00) scale(0.870,1.000)" x="-6.44" y="6.35">D</text><text class="m" transform="translate(71.24,0.00) scale(0.870,1.000)" x="-6.28" y="6.35">C</text></g>
<line x1="1047.57" y1="699.48" x2="1072.50" y2="699.48" stroke="#840000" stroke-width="1.50" stroke-linecap="round"/>
<g transform="translate(1042.57,699.48)" fill="#006464"><text class="s" transform="translate(-39.92,0.00) scale(1.000,0.950)" x="-2.72" y="6.69">I</text><text class="m" transform="translate(-30.28,0.00) scale(0.940,1.000)" x="-6.15" y="6.35">O</text><text class="m" transform="translate(-17.81,0.00) scale(0.880,1.000)" x="-6.14" y="6.35">3</text><text class="m" transform="translate(-5.94,0.00) scale(0.880,1.000)" x="-6.15" y="6.35">2</text></g>
<g transform="translate(1060.04,690.75)" fill="#a90000"><text class="m" transform="translate(-0.00,0.00) scale(0.880,1.000)" x="-6.14" y="6.35">8</text></g>
<polyline points="1072.50,699.48 1122.38,699.48" fill="none" stroke="#009600" stroke-width="1.45" stroke-linecap="round" stroke-linejoin="round"/>
<polygon points="1122.38,710.48 1122.38,688.48 1233.59,688.48 1242.69,699.48 1233.59,710.48" fill="none" stroke="#840000" stroke-width="1.3" stroke-linejoin="miter"/>
<g transform="translate(1126.58,699.48)" fill="#840000"><text class="m" transform="translate(6.23,0.00) scale(0.870,1.000)" x="-6.44" y="6.35">D</text><text class="m" transform="translate(18.70,0.00) scale(0.800,1.000)" x="-6.70" y="6.35">R</text><text class="m" transform="translate(30.28,0.00) scale(0.800,1.000)" x="-6.15" y="6.35">V</text><text class="m" transform="translate(40.37,-1.00) scale(0.810,1.000)" x="-6.15" y="6.35">_</text><text class="m" transform="translate(51.06,0.00) scale(0.800,1.000)" x="-6.04" y="6.35">S</text><text class="m" transform="translate(62.04,0.00) scale(0.810,1.000)" x="-6.69" y="6.35">L</text><text class="m" transform="translate(72.72,0.00) scale(0.740,1.000)" x="-6.43" y="6.35">E</text><text class="m" transform="translate(84.00,0.00) scale(0.740,1.000)" x="-6.43" y="6.35">E</text><text class="m" transform="translate(95.88,0.00) scale(0.840,1.000)" x="-6.41" y="6.35">P</text></g>
<line x1="1047.57" y1="724.41" x2="1072.50" y2="724.41" stroke="#840000" stroke-width="1.50" stroke-linecap="round"/>
<g transform="translate(1042.57,724.41)" fill="#006464"><text class="s" transform="translate(-39.92,0.00) scale(1.000,0.950)" x="-2.72" y="6.69">I</text><text class="m" transform="translate(-30.28,0.00) scale(0.940,1.000)" x="-6.15" y="6.35">O</text><text class="m" transform="translate(-17.81,0.00) scale(0.880,1.000)" x="-6.14" y="6.35">3</text><text class="m" transform="translate(-5.94,0.00) scale(0.880,1.000)" x="-6.14" y="6.35">3</text></g>
<g transform="translate(1060.04,715.68)" fill="#a90000"><text class="m" transform="translate(-0.00,0.00) scale(0.880,1.000)" x="-6.15" y="6.35">9</text></g>
<polyline points="1072.50,724.41 1122.38,724.41" fill="none" stroke="#009600" stroke-width="1.45" stroke-linecap="round" stroke-linejoin="round"/>
<polygon points="1122.38,735.41 1122.38,713.41 1232.99,713.41 1242.09,724.41 1232.99,735.41" fill="none" stroke="#840000" stroke-width="1.3" stroke-linejoin="miter"/>
<g transform="translate(1126.58,724.41)" fill="#840000"><text class="m" transform="translate(6.23,0.00) scale(0.870,1.000)" x="-6.44" y="6.35">D</text><text class="m" transform="translate(18.70,0.00) scale(0.800,1.000)" x="-6.70" y="6.35">R</text><text class="m" transform="translate(30.28,0.00) scale(0.800,1.000)" x="-6.15" y="6.35">V</text><text class="m" transform="translate(40.37,-1.00) scale(0.810,1.000)" x="-6.15" y="6.35">_</text><text class="m" transform="translate(51.35,0.00) scale(0.800,1.000)" x="-6.70" y="6.35">R</text><text class="m" transform="translate(63.23,0.00) scale(0.740,1.000)" x="-6.43" y="6.35">E</text><text class="m" transform="translate(74.80,0.00) scale(0.800,1.000)" x="-6.04" y="6.35">S</text><text class="m" transform="translate(86.38,0.00) scale(0.740,1.000)" x="-6.43" y="6.35">E</text><text class="m" transform="translate(96.77,0.00) scale(0.860,1.000)" x="-6.15" y="6.35">T</text></g>
<line x1="1047.57" y1="749.35" x2="1072.50" y2="749.35" stroke="#840000" stroke-width="1.50" stroke-linecap="round"/>
<g transform="translate(1042.57,749.35)" fill="#006464"><text class="s" transform="translate(-39.92,0.00) scale(1.000,0.950)" x="-2.72" y="6.69">I</text><text class="m" transform="translate(-30.28,0.00) scale(0.940,1.000)" x="-6.15" y="6.35">O</text><text class="m" transform="translate(-17.81,0.00) scale(0.880,1.000)" x="-6.14" y="6.35">3</text><text class="m" transform="translate(-5.94,0.00) scale(0.850,1.000)" x="-6.15" y="6.35">4</text></g>
<g transform="translate(1060.04,740.62)" fill="#a90000"><text class="m" transform="translate(-0.00,0.00) scale(0.880,1.000)" x="-6.24" y="6.35">6</text></g>
<polyline points="1072.50,749.35 1122.38,749.35" fill="none" stroke="#009600" stroke-width="1.45" stroke-linecap="round" stroke-linejoin="round"/>
<polygon points="1122.38,749.35 1131.47,738.35 1239.53,738.35 1239.53,760.35 1131.47,760.35" fill="none" stroke="#840000" stroke-width="1.3" stroke-linejoin="miter"/>
<g transform="translate(1136.17,749.35)" fill="#840000"><text class="m" transform="translate(5.94,0.00) scale(0.800,1.000)" x="-6.04" y="6.35">S</text><text class="m" transform="translate(17.51,0.00) scale(0.740,1.000)" x="-6.43" y="6.35">E</text><text class="m" transform="translate(29.68,0.00) scale(0.910,1.000)" x="-6.15" y="6.35">N</text><text class="m" transform="translate(42.15,0.00) scale(0.800,1.000)" x="-6.04" y="6.35">S</text><text class="m" transform="translate(52.84,-1.00) scale(0.810,1.000)" x="-6.15" y="6.35">_</text><text class="s" transform="translate(60.70,0.00) scale(1.000,0.950)" x="-2.72" y="6.69">I</text><text class="m" transform="translate(70.35,0.00) scale(0.910,1.000)" x="-6.15" y="6.35">N</text><text class="m" transform="translate(81.63,0.00) scale(0.860,1.000)" x="-6.15" y="6.35">T</text><text class="m" transform="translate(92.32,0.00) scale(0.880,1.000)" x="-6.40" y="6.35">1</text></g>
<line x1="1047.57" y1="774.28" x2="1072.50" y2="774.28" stroke="#840000" stroke-width="1.50" stroke-linecap="round"/>
<g transform="translate(1042.57,774.28)" fill="#006464"><text class="s" transform="translate(-39.92,0.00) scale(1.000,0.950)" x="-2.72" y="6.69">I</text><text class="m" transform="translate(-30.28,0.00) scale(0.940,1.000)" x="-6.15" y="6.35">O</text><text class="m" transform="translate(-17.81,0.00) scale(0.880,1.000)" x="-6.14" y="6.35">3</text><text class="m" transform="translate(-5.94,0.00) scale(0.880,1.000)" x="-6.14" y="6.35">5</text></g>
<g transform="translate(1060.04,765.55)" fill="#a90000"><text class="m" transform="translate(-0.00,0.00) scale(0.900,1.000)" x="-6.14" y="6.35">7</text></g>
<path d="M1066.50 768.28L1078.50 780.28M1066.50 780.28L1078.50 768.28" stroke="#000084" stroke-width="1.5" stroke-linecap="round"/>
<path d="M523.93 475.06V450.13M516.45 462.60L523.93 450.13L531.42 462.60" fill="none" stroke="#840000" stroke-width="1.5" stroke-linecap="round" stroke-linejoin="round"/>
<g transform="translate(528.53,431.26)" fill="#006464"><text class="m" transform="translate(-6.68,0.00) scale(0.880,1.000)" x="-6.14" y="6.35">3</text><text class="m" transform="translate(2.23,0.00) scale(0.860,1.000)" x="-6.14" y="6.35">.</text><text class="m" transform="translate(11.13,0.00) scale(0.880,1.000)" x="-6.14" y="6.35">3</text><text class="m" transform="translate(22.41,0.00) scale(0.800,1.000)" x="-6.15" y="6.35">V</text><path d="M-25.13 0.9H-15.53M-20.33 -4.2V6.0" stroke="#006464" stroke-width="1.35" stroke-linecap="round" fill="none"/></g>
<polyline points="523.93,475.06 523.93,500.00 548.87,500.00" fill="none" stroke="#009600" stroke-width="1.45" stroke-linecap="round" stroke-linejoin="round"/>
<line x1="548.87" y1="500.00" x2="561.34" y2="500.00" stroke="#840000" stroke-width="1.50" stroke-linecap="round"/>
<line x1="623.67" y1="500.00" x2="611.21" y2="500.00" stroke="#840000" stroke-width="1.50" stroke-linecap="round"/>
<rect x="561.34" y="490.28" width="49.87" height="19.45" fill="none" stroke="#840000" stroke-width="2.2"/>
<g transform="translate(586.50,475.50)" fill="#006464"><text class="m" transform="translate(-11.87,0.00) scale(0.800,1.000)" x="-6.70" y="6.35">R</text><text class="m" transform="translate(0.30,0.00) scale(0.880,1.000)" x="-6.40" y="6.35">1</text><text class="s" transform="translate(12.17,0.00) scale(0.880,0.950)" x="-5.45" y="6.69">0</text></g>
<g transform="translate(586.50,499.10)" fill="#006464"><text class="m" transform="translate(-10.98,0.00) scale(0.850,1.000)" x="-6.15" y="6.35">4</text><text class="m" transform="translate(0.00,0.00) scale(0.850,1.000)" x="-6.81" y="6.35">k</text><text class="m" transform="translate(10.98,0.00) scale(0.900,1.000)" x="-6.14" y="6.35">7</text></g>
<polyline points="623.67,500.00 648.61,500.00" fill="none" stroke="#009600" stroke-width="1.45" stroke-linecap="round" stroke-linejoin="round"/>
<polygon points="648.61,500.00 657.71,489.00 742.02,489.00 751.12,500.00 742.02,511.00 657.71,511.00" fill="none" stroke="#840000" stroke-width="1.3" stroke-linejoin="miter"/>
<g transform="translate(662.41,500.00)" fill="#840000"><text class="s" transform="translate(3.12,0.00) scale(1.000,0.950)" x="-2.72" y="6.69">I</text><text class="m" transform="translate(12.17,0.00) scale(0.880,1.000)" x="-6.15" y="6.35">2</text><text class="m" transform="translate(24.34,0.00) scale(0.870,1.000)" x="-6.28" y="6.35">C</text><text class="m" transform="translate(35.32,-1.00) scale(0.810,1.000)" x="-6.15" y="6.35">_</text><text class="m" transform="translate(46.01,0.00) scale(0.800,1.000)" x="-6.04" y="6.35">S</text><text class="m" transform="translate(58.18,0.00) scale(0.870,1.000)" x="-6.28" y="6.35">C</text><text class="m" transform="translate(69.46,0.00) scale(0.810,1.000)" x="-6.69" y="6.35">L</text></g>
<path d="M523.93 599.74V574.80M516.45 587.27L523.93 574.80L531.42 587.27" fill="none" stroke="#840000" stroke-width="1.5" stroke-linecap="round" stroke-linejoin="round"/>
<g transform="translate(528.53,555.94)" fill="#006464"><text class="m" transform="translate(-6.68,0.00) scale(0.880,1.000)" x="-6.14" y="6.35">3</text><text class="m" transform="translate(2.23,0.00) scale(0.860,1.000)" x="-6.14" y="6.35">.</text><text class="m" transform="translate(11.13,0.00) scale(0.880,1.000)" x="-6.14" y="6.35">3</text><text class="m" transform="translate(22.41,0.00) scale(0.800,1.000)" x="-6.15" y="6.35">V</text><path d="M-25.13 0.9H-15.53M-20.33 -4.2V6.0" stroke="#006464" stroke-width="1.35" stroke-linecap="round" fill="none"/></g>
<polyline points="523.93,599.74 523.93,624.67 548.87,624.67" fill="none" stroke="#009600" stroke-width="1.45" stroke-linecap="round" stroke-linejoin="round"/>
<line x1="548.87" y1="624.67" x2="561.34" y2="624.67" stroke="#840000" stroke-width="1.50" stroke-linecap="round"/>
<line x1="623.67" y1="624.67" x2="611.21" y2="624.67" stroke="#840000" stroke-width="1.50" stroke-linecap="round"/>
<rect x="561.34" y="614.95" width="49.87" height="19.45" fill="none" stroke="#840000" stroke-width="2.2"/>
<g transform="translate(586.50,600.17)" fill="#006464"><text class="m" transform="translate(-11.65,0.00) scale(0.800,1.000)" x="-6.70" y="6.35">R</text><text class="m" transform="translate(0.52,0.00) scale(0.880,1.000)" x="-6.40" y="6.35">1</text><text class="m" transform="translate(12.39,0.00) scale(0.880,1.000)" x="-6.40" y="6.35">1</text></g>
<g transform="translate(586.50,623.77)" fill="#006464"><text class="m" transform="translate(-10.98,0.00) scale(0.850,1.000)" x="-6.15" y="6.35">4</text><text class="m" transform="translate(0.00,0.00) scale(0.850,1.000)" x="-6.81" y="6.35">k</text><text class="m" transform="translate(10.98,0.00) scale(0.900,1.000)" x="-6.14" y="6.35">7</text></g>
<polyline points="623.67,624.67 648.61,624.67" fill="none" stroke="#009600" stroke-width="1.45" stroke-linecap="round" stroke-linejoin="round"/>
<polygon points="648.61,624.67 657.71,613.67 742.61,613.67 751.71,624.67 742.61,635.67 657.71,635.67" fill="none" stroke="#840000" stroke-width="1.3" stroke-linejoin="miter"/>
<g transform="translate(662.41,624.67)" fill="#840000"><text class="s" transform="translate(3.12,0.00) scale(1.000,0.950)" x="-2.72" y="6.69">I</text><text class="m" transform="translate(12.17,0.00) scale(0.880,1.000)" x="-6.15" y="6.35">2</text><text class="m" transform="translate(24.34,0.00) scale(0.870,1.000)" x="-6.28" y="6.35">C</text><text class="m" transform="translate(35.32,-1.00) scale(0.810,1.000)" x="-6.15" y="6.35">_</text><text class="m" transform="translate(46.01,0.00) scale(0.800,1.000)" x="-6.04" y="6.35">S</text><text class="m" transform="translate(58.18,0.00) scale(0.870,1.000)" x="-6.44" y="6.35">D</text><text class="m" transform="translate(69.76,0.00) scale(0.820,1.000)" x="-6.15" y="6.35">A</text></g>
<path d="M112.51 437.66V412.73M105.03 425.19L112.51 412.73L119.99 425.19" fill="none" stroke="#840000" stroke-width="1.5" stroke-linecap="round" stroke-linejoin="round"/>
<g transform="translate(117.11,393.86)" fill="#006464"><text class="m" transform="translate(-6.68,0.00) scale(0.880,1.000)" x="-6.14" y="6.35">3</text><text class="m" transform="translate(2.23,0.00) scale(0.860,1.000)" x="-6.14" y="6.35">.</text><text class="m" transform="translate(11.13,0.00) scale(0.880,1.000)" x="-6.14" y="6.35">3</text><text class="m" transform="translate(22.41,0.00) scale(0.800,1.000)" x="-6.15" y="6.35">V</text><path d="M-25.13 0.9H-15.53M-20.33 -4.2V6.0" stroke="#006464" stroke-width="1.35" stroke-linecap="round" fill="none"/></g>
<polyline points="112.51,437.66 112.51,462.60 137.44,462.60" fill="none" stroke="#009600" stroke-width="1.45" stroke-linecap="round" stroke-linejoin="round"/>
<line x1="137.44" y1="462.60" x2="149.91" y2="462.60" stroke="#840000" stroke-width="1.50" stroke-linecap="round"/>
<line x1="212.25" y1="462.60" x2="199.78" y2="462.60" stroke="#840000" stroke-width="1.50" stroke-linecap="round"/>
<rect x="149.91" y="452.87" width="49.87" height="19.45" fill="none" stroke="#840000" stroke-width="2.2"/>
<g transform="translate(175.10,437.50)" fill="#006464"><text class="m" transform="translate(-5.94,0.00) scale(0.800,1.000)" x="-6.70" y="6.35">R</text><text class="m" transform="translate(6.23,0.00) scale(0.880,1.000)" x="-6.24" y="6.35">6</text></g>
<g transform="translate(175.10,462.30)" fill="#006464"><text class="m" transform="translate(-11.21,0.00) scale(0.880,1.000)" x="-6.40" y="6.35">1</text><text class="s" transform="translate(0.67,0.00) scale(0.880,0.950)" x="-5.45" y="6.69">0</text><text class="m" transform="translate(11.65,0.00) scale(0.850,1.000)" x="-6.81" y="6.35">k</text></g>
<polyline points="212.25,462.60 237.18,462.60" fill="none" stroke="#009600" stroke-width="1.45" stroke-linecap="round" stroke-linejoin="round"/>
<polygon points="243.48,449.00 260.68,431.50 268.28,439.20 251.08,456.20" fill="#ffffc2" stroke="#840000" stroke-width="1.5" stroke-linejoin="round"/>
<polygon points="237.18,462.60 243.48,449.00 251.08,456.20" fill="#a00000" stroke="#840000" stroke-width="1" stroke-linejoin="round"/>
<g transform="translate(277.80,437.10)" fill="#006464"><text class="m" transform="translate(3.37,0.00) scale(0.860,1.000)" x="-6.15" y="6.35">T</text><text class="m" transform="translate(14.35,0.00) scale(0.840,1.000)" x="-6.41" y="6.35">P</text><text class="m" transform="translate(26.52,0.00) scale(0.880,1.000)" x="-6.40" y="6.35">1</text></g>
<g transform="translate(277.80,459.80)" fill="#006464"><text class="m" transform="translate(4.86,0.00) scale(0.840,1.000)" x="-6.41" y="6.35">P</text><text class="m" transform="translate(18.21,0.00) scale(0.980,1.000)" x="-6.15" y="6.35">W</text><text class="m" transform="translate(31.57,0.00) scale(0.800,1.000)" x="-6.70" y="6.35">R</text></g>
<polygon points="187.31,523.47 187.31,501.47 98.07,501.47 88.97,512.47 98.07,523.47" fill="none" stroke="#840000" stroke-width="1.3" stroke-linejoin="miter"/>
<g transform="translate(183.11,512.47)" fill="#840000"><text class="m" transform="translate(-74.51,0.00) scale(0.740,1.000)" x="-6.43" y="6.35">E</text><text class="m" transform="translate(-62.93,0.00) scale(0.800,1.000)" x="-6.04" y="6.35">S</text><text class="m" transform="translate(-50.76,0.00) scale(0.840,1.000)" x="-6.41" y="6.35">P</text><text class="m" transform="translate(-39.78,-1.00) scale(0.810,1.000)" x="-6.15" y="6.35">_</text><text class="m" transform="translate(-29.39,0.00) scale(0.740,1.000)" x="-6.43" y="6.35">E</text><text class="m" transform="translate(-17.22,0.00) scale(0.910,1.000)" x="-6.15" y="6.35">N</text><text class="m" transform="translate(-5.34,0.00) scale(0.820,1.000)" x="-6.15" y="6.35">A</text></g>
<polyline points="187.31,512.47 237.18,512.47" fill="none" stroke="#009600" stroke-width="1.45" stroke-linecap="round" stroke-linejoin="round"/>
<polygon points="243.48,498.87 260.68,481.37 268.28,489.07 251.08,506.07" fill="#ffffc2" stroke="#840000" stroke-width="1.5" stroke-linejoin="round"/>
<polygon points="237.18,512.47 243.48,498.87 251.08,506.07" fill="#a00000" stroke="#840000" stroke-width="1" stroke-linejoin="round"/>
<g transform="translate(277.80,486.97)" fill="#006464"><text class="m" transform="translate(3.37,0.00) scale(0.860,1.000)" x="-6.15" y="6.35">T</text><text class="m" transform="translate(14.35,0.00) scale(0.840,1.000)" x="-6.41" y="6.35">P</text><text class="m" transform="translate(26.52,0.00) scale(0.880,1.000)" x="-6.15" y="6.35">2</text></g>
<g transform="translate(277.80,509.67)" fill="#006464"><text class="m" transform="translate(4.26,0.00) scale(0.740,1.000)" x="-6.43" y="6.35">E</text><text class="m" transform="translate(16.43,0.00) scale(0.910,1.000)" x="-6.15" y="6.35">N</text><text class="m" transform="translate(28.31,0.00) scale(0.820,1.000)" x="-6.15" y="6.35">A</text></g>
<polygon points="187.31,562.34 178.21,551.34 89.45,551.34 89.45,573.34 178.21,573.34" fill="none" stroke="#840000" stroke-width="1.3" stroke-linejoin="miter"/>
<g transform="translate(173.51,562.34)" fill="#840000"><text class="m" transform="translate(-73.32,0.00) scale(0.740,1.000)" x="-6.43" y="6.35">E</text><text class="m" transform="translate(-61.74,0.00) scale(0.800,1.000)" x="-6.04" y="6.35">S</text><text class="m" transform="translate(-49.57,0.00) scale(0.840,1.000)" x="-6.41" y="6.35">P</text><text class="m" transform="translate(-38.59,-1.00) scale(0.810,1.000)" x="-6.15" y="6.35">_</text><text class="m" transform="translate(-29.09,0.00) scale(0.860,1.000)" x="-6.15" y="6.35">T</text><text class="m" transform="translate(-18.40,0.00) scale(0.810,1.000)" x="-6.15" y="6.35">X</text><text class="m" transform="translate(-6.23,0.00) scale(0.870,1.000)" x="-6.44" y="6.35">D</text></g>
<polyline points="187.31,562.34 237.18,562.34" fill="none" stroke="#009600" stroke-width="1.45" stroke-linecap="round" stroke-linejoin="round"/>
<polygon points="243.48,548.74 260.68,531.24 268.28,538.94 251.08,555.94" fill="#ffffc2" stroke="#840000" stroke-width="1.5" stroke-linejoin="round"/>
<polygon points="237.18,562.34 243.48,548.74 251.08,555.94" fill="#a00000" stroke="#840000" stroke-width="1" stroke-linejoin="round"/>
<g transform="translate(277.80,536.84)" fill="#006464"><text class="m" transform="translate(3.37,0.00) scale(0.860,1.000)" x="-6.15" y="6.35">T</text><text class="m" transform="translate(14.35,0.00) scale(0.840,1.000)" x="-6.41" y="6.35">P</text><text class="m" transform="translate(26.52,0.00) scale(0.880,1.000)" x="-6.14" y="6.35">3</text></g>
<g transform="translate(277.80,559.54)" fill="#006464"><text class="m" transform="translate(3.37,0.00) scale(0.860,1.000)" x="-6.15" y="6.35">T</text><text class="m" transform="translate(14.06,0.00) scale(0.810,1.000)" x="-6.15" y="6.35">X</text><text class="m" transform="translate(26.23,0.00) scale(0.870,1.000)" x="-6.44" y="6.35">D</text></g>
<polygon points="187.31,623.21 187.31,601.21 96.29,601.21 87.19,612.21 96.29,623.21" fill="none" stroke="#840000" stroke-width="1.3" stroke-linejoin="miter"/>
<g transform="translate(183.11,612.21)" fill="#840000"><text class="m" transform="translate(-76.29,0.00) scale(0.740,1.000)" x="-6.43" y="6.35">E</text><text class="m" transform="translate(-64.71,0.00) scale(0.800,1.000)" x="-6.04" y="6.35">S</text><text class="m" transform="translate(-52.54,0.00) scale(0.840,1.000)" x="-6.41" y="6.35">P</text><text class="m" transform="translate(-41.56,-1.00) scale(0.810,1.000)" x="-6.15" y="6.35">_</text><text class="m" transform="translate(-30.57,0.00) scale(0.800,1.000)" x="-6.70" y="6.35">R</text><text class="m" transform="translate(-18.40,0.00) scale(0.810,1.000)" x="-6.15" y="6.35">X</text><text class="m" transform="translate(-6.23,0.00) scale(0.870,1.000)" x="-6.44" y="6.35">D</text></g>
<polyline points="187.31,612.21 237.18,612.21" fill="none" stroke="#009600" stroke-width="1.45" stroke-linecap="round" stroke-linejoin="round"/>
<polygon points="243.48,598.61 260.68,581.11 268.28,588.81 251.08,605.81" fill="#ffffc2" stroke="#840000" stroke-width="1.5" stroke-linejoin="round"/>
<polygon points="237.18,612.21 243.48,598.61 251.08,605.81" fill="#a00000" stroke="#840000" stroke-width="1" stroke-linejoin="round"/>
<g transform="translate(277.80,586.71)" fill="#006464"><text class="m" transform="translate(3.37,0.00) scale(0.860,1.000)" x="-6.15" y="6.35">T</text><text class="m" transform="translate(14.35,0.00) scale(0.840,1.000)" x="-6.41" y="6.35">P</text><text class="m" transform="translate(26.52,0.00) scale(0.850,1.000)" x="-6.15" y="6.35">4</text></g>
<g transform="translate(277.80,609.41)" fill="#006464"><text class="m" transform="translate(4.86,0.00) scale(0.800,1.000)" x="-6.70" y="6.35">R</text><text class="m" transform="translate(17.03,0.00) scale(0.810,1.000)" x="-6.15" y="6.35">X</text><text class="m" transform="translate(29.20,0.00) scale(0.870,1.000)" x="-6.44" y="6.35">D</text></g>
<polyline points="237.18,662.08 187.31,662.08 187.31,687.01" fill="none" stroke="#009600" stroke-width="1.45" stroke-linecap="round" stroke-linejoin="round"/>
<polygon points="243.48,648.48 260.68,630.98 268.28,638.68 251.08,655.68" fill="#ffffc2" stroke="#840000" stroke-width="1.5" stroke-linejoin="round"/>
<polygon points="237.18,662.08 243.48,648.48 251.08,655.68" fill="#a00000" stroke="#840000" stroke-width="1" stroke-linejoin="round"/>
<g transform="translate(277.80,636.58)" fill="#006464"><text class="m" transform="translate(3.37,0.00) scale(0.860,1.000)" x="-6.15" y="6.35">T</text><text class="m" transform="translate(14.35,0.00) scale(0.840,1.000)" x="-6.41" y="6.35">P</text><text class="m" transform="translate(26.52,0.00) scale(0.880,1.000)" x="-6.14" y="6.35">5</text></g>
<g transform="translate(277.80,659.28)" fill="#006464"><text class="m" transform="translate(4.86,0.00) scale(0.910,1.000)" x="-6.09" y="6.35">G</text><text class="m" transform="translate(17.62,0.00) scale(0.910,1.000)" x="-6.15" y="6.35">N</text><text class="m" transform="translate(30.38,0.00) scale(0.870,1.000)" x="-6.44" y="6.35">D</text></g>
<path d="M187.31 687.01V699.48M174.84 699.48H199.78L187.31 711.95Z" fill="none" stroke="#840000" stroke-width="1.5" stroke-linejoin="round"/>
<g transform="translate(188.01,730.11)" fill="#006464"><text class="m" transform="translate(-12.76,0.00) scale(0.910,1.000)" x="-6.09" y="6.35">G</text><text class="m" transform="translate(0.00,0.00) scale(0.910,1.000)" x="-6.15" y="6.35">N</text><text class="m" transform="translate(12.76,0.00) scale(0.870,1.000)" x="-6.44" y="6.35">D</text></g>
</svg></body></html>
